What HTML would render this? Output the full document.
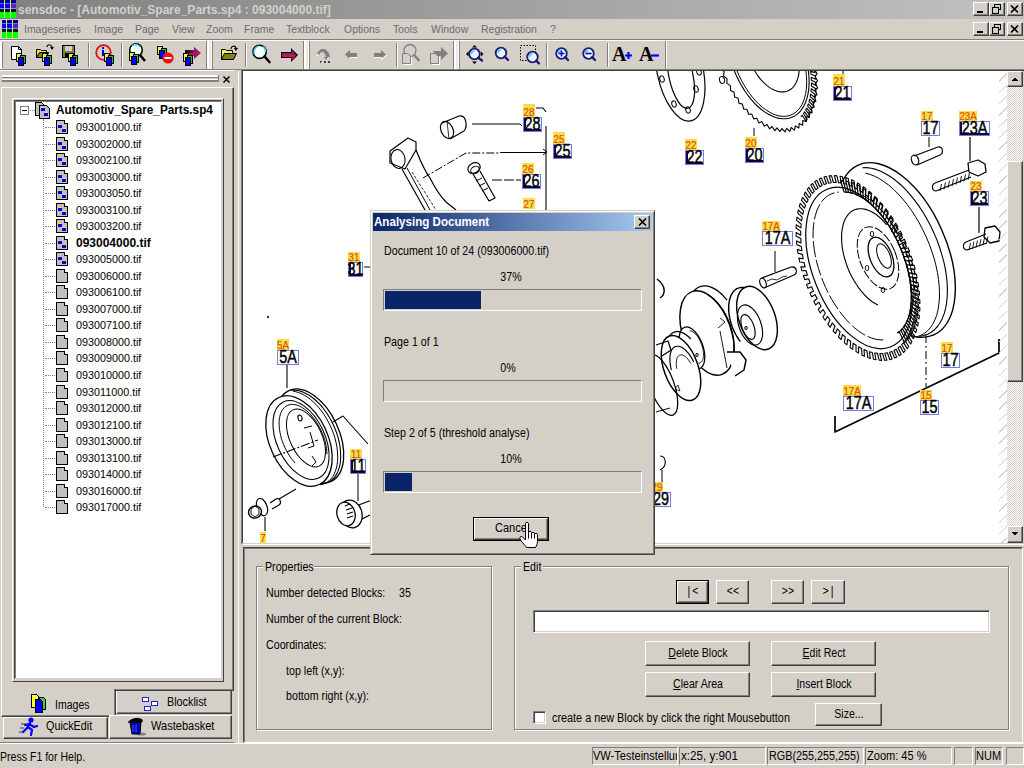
<!DOCTYPE html>
<html><head><meta charset="utf-8">
<style>
*{box-sizing:border-box}
html,body{margin:0;padding:0}
body{width:1024px;height:768px;position:relative;overflow:hidden;background:#d4d0c8;font-family:"Liberation Sans",sans-serif;font-size:11px;color:#000}
.a{position:absolute}
.t{position:absolute;white-space:nowrap;line-height:13px}
.btn{position:absolute;background:#d4d0c8;border-top:1px solid #fff;border-left:1px solid #fff;border-right:1px solid #404040;border-bottom:1px solid #404040;box-shadow:inset -1px -1px 0 #808080}
.sunk{position:absolute;border-top:1px solid #808080;border-left:1px solid #808080;border-right:1px solid #fff;border-bottom:1px solid #fff}
.etch{position:absolute;border-top:1px solid #808080;border-left:1px solid #808080;border-right:1px solid #fff;border-bottom:1px solid #fff;box-shadow:inset 1px 1px 0 #fff, -1px -1px 0 0 transparent}
.sb{position:absolute;border-top:1px solid #808080;border-left:1px solid #808080;border-right:1px solid #fff;border-bottom:1px solid #fff;height:17px;top:747px}
.lbl{position:absolute;white-space:nowrap;font-size:11px;line-height:13px}
</style></head>
<body>
<!-- TITLE BAR -->
<div class="a" style="left:0;top:0;width:1024px;height:19px;background:linear-gradient(to right,#808080 0,#c0c0c0 1000px)"></div>
<div class="t" style="left:18px;top:3px;font-weight:bold;font-size:12px;color:#d4d0c8;line-height:14px">sensdoc - [Automotiv_Spare_Parts.sp4 : 093004000.tif]</div>
<!-- title buttons -->
<div class="btn" style="left:973px;top:2px;width:16px;height:14px"></div>
<div class="btn" style="left:989px;top:2px;width:16px;height:14px"></div>
<div class="btn" style="left:1007px;top:2px;width:16px;height:14px"></div>

<!-- MENU BAR -->
<div class="a" style="left:0;top:39px;width:1024px;height:1px;background:#808080"></div>
<div class="a" style="left:0;top:40px;width:1024px;height:1px;background:#fff"></div>
<div class="t" style="left:24px;top:22.5px;color:#6c6c6c;font-size:11.5px;transform:scaleX(0.91);transform-origin:0 0">Imageseries</div>
<div class="t" style="left:94px;top:22.5px;color:#6c6c6c;font-size:11.5px;transform:scaleX(0.91);transform-origin:0 0">Image</div>
<div class="t" style="left:135px;top:22.5px;color:#6c6c6c;font-size:11.5px;transform:scaleX(0.91);transform-origin:0 0">Page</div>
<div class="t" style="left:172px;top:22.5px;color:#6c6c6c;font-size:11.5px;transform:scaleX(0.91);transform-origin:0 0">View</div>
<div class="t" style="left:206px;top:22.5px;color:#6c6c6c;font-size:11.5px;transform:scaleX(0.91);transform-origin:0 0">Zoom</div>
<div class="t" style="left:244px;top:22.5px;color:#6c6c6c;font-size:11.5px;transform:scaleX(0.91);transform-origin:0 0">Frame</div>
<div class="t" style="left:286px;top:22.5px;color:#6c6c6c;font-size:11.5px;transform:scaleX(0.91);transform-origin:0 0">Textblock</div>
<div class="t" style="left:344px;top:22.5px;color:#6c6c6c;font-size:11.5px;transform:scaleX(0.91);transform-origin:0 0">Options</div>
<div class="t" style="left:393px;top:22.5px;color:#6c6c6c;font-size:11.5px;transform:scaleX(0.91);transform-origin:0 0">Tools</div>
<div class="t" style="left:431px;top:22.5px;color:#6c6c6c;font-size:11.5px;transform:scaleX(0.91);transform-origin:0 0">Window</div>
<div class="t" style="left:481px;top:22.5px;color:#6c6c6c;font-size:11.5px;transform:scaleX(0.91);transform-origin:0 0">Registration</div>
<div class="t" style="left:550px;top:22.5px;color:#6c6c6c;font-size:11.5px;transform:scaleX(0.91);transform-origin:0 0">?</div>
<div class="btn" style="left:973px;top:22px;width:16px;height:14px"></div>
<div class="btn" style="left:989px;top:22px;width:16px;height:14px"></div>
<div class="btn" style="left:1007px;top:22px;width:16px;height:14px"></div>

<!-- TOOLBAR -->
<div class="a" style="left:0px;top:41px;width:1px;height:28px;background:#fff"></div>
<div class="a" style="left:1px;top:41px;width:1px;height:28px;background:#fff"></div>
<div class="a" style="left:2px;top:42px;width:1px;height:26px;background:#808080"></div>
<div class="a" style="left:206px;top:41px;width:1px;height:28px;background:#808080"></div>
<div class="a" style="left:207px;top:41px;width:1px;height:28px;background:#fff"></div>
<div class="a" style="left:208px;top:41px;width:1px;height:28px;background:#fff"></div>
<div class="a" style="left:209px;top:41px;width:1px;height:28px;background:#ece9e4"></div>
<div class="a" style="left:210px;top:41px;width:1px;height:28px;background:#ece9e4"></div>
<div class="a" style="left:211px;top:41px;width:1px;height:28px;background:#fff"></div>
<div class="a" style="left:212px;top:41px;width:1px;height:28px;background:#808080"></div>
<div class="a" style="left:303px;top:41px;width:1px;height:28px;background:#808080"></div>
<div class="a" style="left:304px;top:41px;width:1px;height:28px;background:#fff"></div>
<div class="a" style="left:305px;top:41px;width:1px;height:28px;background:#fff"></div>
<div class="a" style="left:306px;top:41px;width:1px;height:28px;background:#ece9e4"></div>
<div class="a" style="left:307px;top:41px;width:1px;height:28px;background:#ece9e4"></div>
<div class="a" style="left:308px;top:41px;width:1px;height:28px;background:#fff"></div>
<div class="a" style="left:309px;top:41px;width:1px;height:28px;background:#808080"></div>
<div class="a" style="left:453px;top:41px;width:1px;height:28px;background:#808080"></div>
<div class="a" style="left:454px;top:41px;width:1px;height:28px;background:#fff"></div>
<div class="a" style="left:455px;top:41px;width:1px;height:28px;background:#fff"></div>
<div class="a" style="left:456px;top:41px;width:1px;height:28px;background:#ece9e4"></div>
<div class="a" style="left:457px;top:41px;width:1px;height:28px;background:#ece9e4"></div>
<div class="a" style="left:458px;top:41px;width:1px;height:28px;background:#fff"></div>
<div class="a" style="left:459px;top:41px;width:1px;height:28px;background:#808080"></div>
<div class="a" style="left:665px;top:41px;width:1px;height:28px;background:#808080"></div>
<div class="a" style="left:666px;top:41px;width:1px;height:28px;background:#fff"></div>
<div class="a" style="left:88px;top:43px;width:1px;height:24px;background:#808080"></div>
<div class="a" style="left:89px;top:43px;width:1px;height:24px;background:#fff"></div>
<div class="a" style="left:121px;top:43px;width:1px;height:24px;background:#808080"></div>
<div class="a" style="left:122px;top:43px;width:1px;height:24px;background:#fff"></div>
<div class="a" style="left:245px;top:43px;width:1px;height:24px;background:#808080"></div>
<div class="a" style="left:246px;top:43px;width:1px;height:24px;background:#fff"></div>
<div class="a" style="left:396px;top:43px;width:1px;height:24px;background:#808080"></div>
<div class="a" style="left:397px;top:43px;width:1px;height:24px;background:#fff"></div>
<div class="a" style="left:546px;top:43px;width:1px;height:24px;background:#808080"></div>
<div class="a" style="left:547px;top:43px;width:1px;height:24px;background:#fff"></div>
<div class="a" style="left:607px;top:43px;width:1px;height:24px;background:#808080"></div>
<div class="a" style="left:608px;top:43px;width:1px;height:24px;background:#fff"></div>
<svg class="a" style="left:11px;top:45px" width="16" height="21" viewBox="0 0 16 21"><path d="M0.5 1.5H7.5L10.5 4.5V14.5H0.5Z" fill="#fff" stroke="#000"/><path d="M7.5 1.5V4.5H10.5" fill="none" stroke="#000"/><g transform="translate(5 8)" shape-rendering="crispEdges">
<path d="M0 0H5L6 1V9H0Z" fill="#000"/><path d="M1 1H4L5 2V8H1Z" fill="#f0f040"/>
<path d="M4 2H9L10 3V11H4Z" fill="#000"/><path d="M5 3H8L9 4V10H5Z" fill="#30c030"/>
<path d="M2 4H7L8 5V13H2Z" fill="#000"/><path d="M3 5H6L7 6V12H3Z" fill="#0000ff"/>
</g></svg>
<svg class="a" style="left:36px;top:44px" width="18" height="22" viewBox="0 0 18 22"><path d="M11 3C11 0 15 0 16 3" fill="none" stroke="#000" stroke-width="1.2"/><path d="M14 3H18L16 6Z" fill="#000"/><path d="M0.5 5.5H4.5L5.5 6.5H10.5V13.5H0.5Z" fill="#e8e050" stroke="#000"/><path d="M0.5 13.5L3.5 8.5H12.5L10.5 13.5Z" fill="#808020" stroke="#000"/><g transform="translate(6 9)" shape-rendering="crispEdges">
<path d="M0 0H5L6 1V9H0Z" fill="#000"/><path d="M1 1H4L5 2V8H1Z" fill="#f0f040"/>
<path d="M4 2H9L10 3V11H4Z" fill="#000"/><path d="M5 3H8L9 4V10H5Z" fill="#30c030"/>
<path d="M2 4H7L8 5V13H2Z" fill="#000"/><path d="M3 5H6L7 6V12H3Z" fill="#0000ff"/>
</g></svg>
<svg class="a" style="left:62px;top:44px" width="18" height="22" viewBox="0 0 18 22"><rect x="0.5" y="1.5" width="12" height="12" fill="#808040" stroke="#000"/><rect x="3" y="2" width="7" height="5" fill="#d4d0c8"/><rect x="3" y="9" width="6" height="4" fill="#000"/><g transform="translate(6 9)" shape-rendering="crispEdges">
<path d="M0 0H5L6 1V9H0Z" fill="#000"/><path d="M1 1H4L5 2V8H1Z" fill="#f0f040"/>
<path d="M4 2H9L10 3V11H4Z" fill="#000"/><path d="M5 3H8L9 4V10H5Z" fill="#30c030"/>
<path d="M2 4H7L8 5V13H2Z" fill="#000"/><path d="M3 5H6L7 6V12H3Z" fill="#0000ff"/>
</g></svg>
<svg class="a" style="left:94px;top:43px" width="22" height="23" viewBox="0 0 22 23"><circle cx="9.5" cy="9.5" r="7.3" fill="none" stroke="#e01010" stroke-width="1.8"/><rect x="8" y="4" width="2" height="2" fill="#0000d0"/><rect x="8" y="7" width="2" height="6" fill="#0000d0"/><g transform="translate(10 10)" shape-rendering="crispEdges">
<path d="M0 0H5L6 1V9H0Z" fill="#000"/><path d="M1 1H4L5 2V8H1Z" fill="#f0f040"/>
<path d="M4 2H9L10 3V11H4Z" fill="#000"/><path d="M5 3H8L9 4V10H5Z" fill="#30c030"/>
<path d="M2 4H7L8 5V13H2Z" fill="#000"/><path d="M3 5H6L7 6V12H3Z" fill="#0000ff"/>
</g></svg>
<svg class="a" style="left:126px;top:42px" width="22" height="24" viewBox="0 0 22 24"><circle cx="10" cy="8" r="6.3" fill="#f0ffff" stroke="#000" stroke-width="1.5"/><path d="M6 4A5 5 0 0 1 14 5" stroke="#40d0e0" stroke-width="1.5" fill="none"/><path d="M14 13L19 19" stroke="#000" stroke-width="2.6"/><g transform="translate(3 10)" shape-rendering="crispEdges">
<path d="M0 0H5L6 1V9H0Z" fill="#000"/><path d="M1 1H4L5 2V8H1Z" fill="#f0f040"/>
<path d="M4 2H9L10 3V11H4Z" fill="#000"/><path d="M5 3H8L9 4V10H5Z" fill="#30c030"/>
<path d="M2 4H7L8 5V13H2Z" fill="#000"/><path d="M3 5H6L7 6V12H3Z" fill="#0000ff"/>
</g></svg>
<svg class="a" style="left:156px;top:45px" width="20" height="20" viewBox="0 0 20 20"><g transform="translate(1 1)" shape-rendering="crispEdges">
<path d="M0 0H5L6 1V9H0Z" fill="#000"/><path d="M1 1H4L5 2V8H1Z" fill="#f0f040"/>
<path d="M4 2H9L10 3V11H4Z" fill="#000"/><path d="M5 3H8L9 4V10H5Z" fill="#30c030"/>
<path d="M2 4H7L8 5V13H2Z" fill="#000"/><path d="M3 5H6L7 6V12H3Z" fill="#0000ff"/>
</g><circle cx="12" cy="13" r="5.6" fill="#ee1010"/><rect x="8.5" y="12" width="7" height="2" fill="#fff"/></svg>
<svg class="a" style="left:182px;top:46px" width="21" height="20" viewBox="0 0 21 20"><defs><linearGradient id="ag" x1="0" x2="1"><stop offset="0" stop-color="#000"/><stop offset="0.6" stop-color="#802080"/><stop offset="1" stop-color="#e01030"/></linearGradient></defs><path d="M3 4H12V1L19 7L12 13V10H3Z" fill="url(#ag)"/><path d="M5 7H12V10H5Z" fill="#d01020"/><g transform="translate(1 7)" shape-rendering="crispEdges">
<path d="M0 0H5L6 1V9H0Z" fill="#000"/><path d="M1 1H4L5 2V8H1Z" fill="#f0f040"/>
<path d="M4 2H9L10 3V11H4Z" fill="#000"/><path d="M5 3H8L9 4V10H5Z" fill="#30c030"/>
<path d="M2 4H7L8 5V13H2Z" fill="#000"/><path d="M3 5H6L7 6V12H3Z" fill="#0000ff"/>
</g></svg>
<svg class="a" style="left:221px;top:45px" width="18" height="18" viewBox="0 0 18 18"><path d="M10 4C10 1 14 0 15 3" fill="none" stroke="#000" stroke-width="1.2"/><path d="M13 3H17L15 6Z" fill="#000"/><path d="M0.5 4.5H4.5L5.5 5.5H11.5V14.5H0.5Z" fill="#f0f060" stroke="#000"/><path d="M0.5 14.5L3.5 8.5H15.5L12.5 14.5Z" fill="#808020" stroke="#000"/></svg>
<svg class="a" style="left:251px;top:43px" width="21" height="22" viewBox="0 0 21 22"><circle cx="8.6" cy="8.8" r="6.6" fill="#f4ffff" stroke="#000" stroke-width="1.6"/><path d="M3.5 11A6 6 0 0 1 8 3" stroke="#50d8e8" stroke-width="1.6" fill="none"/><path d="M12 3.5A6 6 0 0 1 14.5 9" stroke="#50d8e8" stroke-width="1.4" fill="none"/><path d="M13.5 13.5L18.5 19" stroke="#000" stroke-width="2.6" stroke-linecap="round"/></svg>
<svg class="a" style="left:281px;top:48px" width="18" height="15" viewBox="0 0 18 15"><path d="M0 4H10V0L17 7L10 14V10H0Z" fill="#000"/><path d="M1 5H11V2L15 7L11 12V9H1Z" fill="#802080"/><path d="M1 7H15L11 12V9H1Z" fill="#e01030"/></svg>
<svg class="a" style="left:316px;top:47px" width="18" height="17" viewBox="0 0 18 17"><path d="M1 6L5 2H9L13 6L14 10H12L10 13L8 10H10L9 7L7 5H5L3 8Z" fill="#808080"/><path d="M2 7L1 9" stroke="#fff"/><rect x="4" y="14" width="2" height="2" fill="#404040"/><rect x="8" y="14" width="2" height="2" fill="#404040"/><rect x="12" y="14" width="2" height="2" fill="#404040"/><rect x="5" y="15" width="1" height="1" fill="#fff"/></svg>
<svg class="a" style="left:345px;top:50px" width="14" height="10" viewBox="0 0 14 10"><path d="M0 4.5L5 0V3H12V7H5V9Z" fill="#808080"/><path d="M5 9.5V7.5H12.5" stroke="#fff" fill="none"/></svg>
<svg class="a" style="left:373px;top:50px" width="14" height="10" viewBox="0 0 14 10"><path d="M13 4.5L8 0V3H1V7H8V9Z" fill="#808080"/><path d="M1 7.5H8.5V9.5L13.5 5" stroke="#fff" fill="none"/></svg>
<svg class="a" style="left:401px;top:43px" width="21" height="22" viewBox="0 0 21 22"><circle cx="9" cy="7.5" r="6" fill="none" stroke="#808080" stroke-width="1.3"/><path d="M13 12L18.5 18" stroke="#808080" stroke-width="2.5"/><path d="M1.5 10.5H6.5L9.5 13.5V20.5H1.5Z" fill="#d4d0c8" stroke="#808080"/><path d="M2.5 21.5H10.5V14" stroke="#fff" fill="none"/></svg>
<svg class="a" style="left:429px;top:46px" width="20" height="19" viewBox="0 0 20 19"><path d="M4 5H12V1L19 7.5L12 14V10H7" fill="#808080"/><path d="M1.5 7.5H6.5L9.5 10.5V17.5H1.5Z" fill="#d4d0c8" stroke="#808080"/><path d="M2.5 18.5H10.5V11" stroke="#fff" fill="none"/></svg>
<svg class="a" style="left:464px;top:45px" width="21" height="20" viewBox="0 0 21 20"><defs></defs><circle cx="10.5" cy="9" r="5.3" fill="#e8f8ff" stroke="#1c1c70" stroke-width="1.8"/><path d="M7.5 9A3 3 0 0 1 10.5 6" stroke="#50c8f0" stroke-width="1.4" fill="none"/><path d="M14.209999999999999 12.709999999999999L18 15.5" stroke="#1c1c70" stroke-width="2.4" stroke-linecap="round"/><path d="M10.5 0L13 2.5H8Z M10.5 19L13 16.5H8Z M2 9L4.5 6.5V11.5Z M19.5 9L17 6.5V11.5Z" fill="#000"/></svg>
<svg class="a" style="left:493px;top:45px" width="18" height="18" viewBox="0 0 18 18"><defs></defs><circle cx="8" cy="8" r="5.3" fill="#e8f8ff" stroke="#1c1c70" stroke-width="1.8"/><path d="M5 8A3 3 0 0 1 8 5" stroke="#50c8f0" stroke-width="1.4" fill="none"/><path d="M11.709999999999999 11.709999999999999L15 15" stroke="#1c1c70" stroke-width="2.4" stroke-linecap="round"/></svg>
<svg class="a" style="left:518px;top:43px" width="24" height="23" viewBox="0 0 24 23"><rect x="2.5" y="2.5" width="15" height="15" fill="none" stroke="#000" stroke-dasharray="1.5 1.5"/><defs></defs><circle cx="14.5" cy="14" r="5.3" fill="#e8f8ff" stroke="#1c1c70" stroke-width="1.8"/><path d="M11.5 14A3 3 0 0 1 14.5 11" stroke="#50c8f0" stroke-width="1.4" fill="none"/><path d="M18.21 17.71L21 20.5" stroke="#1c1c70" stroke-width="2.4" stroke-linecap="round"/></svg>
<svg class="a" style="left:553px;top:45px" width="18" height="18" viewBox="0 0 18 18"><defs></defs><circle cx="8.5" cy="8.5" r="5.3" fill="#e8f8ff" stroke="#1c1c70" stroke-width="1.8"/><path d="M5.5 8.5A3 3 0 0 1 8.5 5.5" stroke="#50c8f0" stroke-width="1.4" fill="none"/><path d="M12.209999999999999 12.209999999999999L15 15" stroke="#1c1c70" stroke-width="2.4" stroke-linecap="round"/><path d="M8.5 5.5V11.5M5.5 8.5H11.5" stroke="#0000e0" stroke-width="1.6"/></svg>
<svg class="a" style="left:580px;top:45px" width="18" height="18" viewBox="0 0 18 18"><defs></defs><circle cx="8.5" cy="8.5" r="5.3" fill="#e8f8ff" stroke="#1c1c70" stroke-width="1.8"/><path d="M5.5 8.5A3 3 0 0 1 8.5 5.5" stroke="#50c8f0" stroke-width="1.4" fill="none"/><path d="M12.209999999999999 12.209999999999999L15 15" stroke="#1c1c70" stroke-width="2.4" stroke-linecap="round"/><path d="M5.5 8.5H11.5" stroke="#0000e0" stroke-width="1.6"/></svg>
<div class="t" style="left:612px;top:44px;font-family:'Liberation Serif',serif;font-weight:bold;font-size:20px;line-height:20px">A</div>
<svg class="a" style="left:624px;top:51px" width="9" height="9" viewBox="0 0 9 9"><path d="M4.5 1V8M1 4.5H8" stroke="#0000ff" stroke-width="2.2"/></svg>
<div class="t" style="left:639px;top:44px;font-family:'Liberation Serif',serif;font-weight:bold;font-size:20px;line-height:20px">A</div>
<svg class="a" style="left:650px;top:51px" width="10" height="9" viewBox="0 0 10 9"><path d="M1 4.5H9" stroke="#0000ff" stroke-width="2.2"/></svg>
<div class="a" style="left:0;top:69px;width:1024px;height:1px;background:#808080"></div>

<!-- LEFT PANEL -->
<div class="a" style="left:0;top:70px;width:234px;height:1px;background:#fff"></div>
<div class="a" style="left:2px;top:75px;width:217px;height:1px;background:#fff"></div>
<div class="a" style="left:2px;top:76px;width:217px;height:1px;background:#fff"></div>
<div class="a" style="left:2px;top:77px;width:217px;height:1px;background:#808080"></div>
<div class="a" style="left:2px;top:79px;width:217px;height:1px;background:#fff"></div>
<div class="a" style="left:2px;top:80px;width:217px;height:1px;background:#808080"></div>
<div class="a" style="left:2px;top:81px;width:217px;height:1px;background:#808080"></div>
<div class="a" style="left:218px;top:75px;width:1px;height:7px;background:#808080"></div>
<svg class="a" style="left:222px;top:75px" width="9" height="8"><path d="M1.5 1.5L7.5 7.5M7.5 1.5L1.5 7.5" stroke="#000" stroke-width="1.5"/></svg>
<div class="a" style="left:1px;top:87px;width:233px;height:604px;border-top:1px solid #fff;border-left:1px solid #fff;border-right:1px solid #404040;border-bottom:1px solid #404040;box-shadow:inset -1px -1px 0 #808080"></div>
<div class="a" style="left:12px;top:98px;width:212px;height:584px;border-top:1px solid #fff;border-left:1px solid #fff;border-right:1px solid #404040;border-bottom:1px solid #404040"></div>
<div class="a" style="left:14px;top:100px;width:208px;height:579px;background:#fff;border-top:1px solid #404040;border-left:1px solid #404040;border-right:1px solid #d4d0c8;border-bottom:1px solid #d4d0c8;box-shadow:inset 1px 1px 0 #808080"></div>
<div class="a" style="left:1px;top:689px;width:115px;height:28px;background:#d4d0c8;border-left:1px solid #fff;border-right:1px solid #404040;border-bottom:1px solid #404040;box-shadow:inset -1px -1px 0 #808080"></div>
<div class="a" style="left:116px;top:691px;width:116px;height:23px;background:#d4d0c8;border-left:1px solid #fff;border-right:1px solid #404040;border-bottom:1px solid #404040;box-shadow:inset -1px -1px 0 #808080"></div>
<div class="a" style="left:3px;top:717px;width:105px;height:22px;background:#d4d0c8;border-left:1px solid #fff;border-top:1px solid #fff;border-right:1px solid #404040;border-bottom:1px solid #404040;box-shadow:inset -1px -1px 0 #808080"></div>
<div class="a" style="left:109px;top:715px;width:123px;height:24px;background:#d4d0c8;border-left:1px solid #fff;border-top:1px solid #fff;border-right:1px solid #404040;border-bottom:1px solid #404040;box-shadow:inset -1px -1px 0 #808080"></div>
<div class="t" style="left:55px;top:699px;font-size:12px;transform:scaleX(0.88);transform-origin:0 0">Images</div>
<div class="t" style="left:167px;top:696px;font-size:12px;transform:scaleX(0.9);transform-origin:0 0">Blocklist</div>
<div class="t" style="left:46px;top:720px;font-size:12px;transform:scaleX(0.9);transform-origin:0 0">QuickEdit</div>
<div class="t" style="left:151px;top:720px;font-size:12px;transform:scaleX(0.92);transform-origin:0 0">Wastebasket</div>
<svg class="a" style="left:31px;top:694px" width="18" height="20" shape-rendering="crispEdges">
<path d="M0.5 0.5H5.5L7.5 2.5V13.5H0.5Z" fill="#ffff40" stroke="#000"/>
<path d="M8.5 3.5H12.5L14.5 5.5V15.5H8.5Z" fill="#40d040" stroke="#000"/>
<path d="M4.5 5.5H9.5L11.5 7.5V18.5H4.5Z" fill="#0000ff" stroke="#000"/>
</svg>
<svg class="a" style="left:141px;top:693px" width="20" height="18" shape-rendering="crispEdges">
<rect x="1.5" y="4.5" width="6" height="4" fill="#fff" stroke="#2020e0"/>
<rect x="10.5" y="8.5" width="6" height="4" fill="#fff" stroke="#2020e0"/>
<rect x="3.5" y="13.5" width="6" height="4" fill="#fff" stroke="#2020e0"/>
<rect x="2" y="3" width="3" height="1" fill="#e0d040"/><rect x="11" y="7" width="3" height="1" fill="#e0d040"/>
</svg>
<svg class="a" style="left:19px;top:717px" width="20" height="19">
<circle cx="12" cy="3" r="2.6" fill="#0000ff"/>
<path d="M11 6L8 11L4 15M9 10L13 13L12 18M10 7L15 10L18 9M10 7L6 8" stroke="#0000ff" stroke-width="2.2" fill="none" stroke-linecap="round"/>
<path d="M2 7H7M1 11H5M0 15H3" stroke="#404040" stroke-width="1"/>
</svg>
<svg class="a" style="left:127px;top:716px" width="19" height="20">
<ellipse cx="14" cy="18" rx="5" ry="1.5" fill="#808080"/>
<path d="M3 6L5 18H13L14 6Z" fill="#0000c0" stroke="#000" stroke-width="1"/>
<path d="M1 7C2 2 15 0 16 5L14 7Z" fill="#000"/>
<path d="M6 9V16M9 9V16" stroke="#4060ff" stroke-width="1"/>
</svg>
<div class="a" style="left:0;top:742px;width:234px;height:1px;background:#808080"></div>
<div class="a" style="left:0;top:743px;width:1024px;height:1px;background:#fff"></div>
<div class="a" style="left:20px;top:106px;width:9px;height:9px;border:1px solid #808080;background:#fff"></div>
<div class="a" style="left:22px;top:110px;width:5px;height:1px;background:#000"></div>
<div class="a" style="left:30px;top:110px;width:5px;height:1px;border-top:1px dotted #808080"></div>
<div class="a" style="left:43px;top:119px;width:1px;height:388.2px;border-left:1px dotted #808080"></div>
<svg class="a" style="left:35px;top:102px" width="16" height="17" shape-rendering="crispEdges">
<path d="M0.5 0.5H6.5L8.5 2.5V13.5H0.5Z" fill="#c0c0c0" stroke="#000"/>
<path d="M4.5 3.5H11.5L14.5 6.5V16.5H4.5Z" fill="#c0c0c0" stroke="#000"/>
<rect x="6" y="6" width="4" height="3" fill="#0000e0"/><rect x="9" y="11" width="4" height="3" fill="#0000e0"/>
<rect x="6" y="5" width="3" height="1" fill="#e8e060"/><rect x="10" y="10" width="3" height="1" fill="#e8e060"/>
</svg>
<div class="t" style="left:56px;top:103px;font-weight:bold;font-size:12px;line-height:14px;transform:scaleX(0.98);transform-origin:0 0">Automotiv_Spare_Parts.sp4</div>
<div class="a" style="left:45px;top:127.0px;width:10px;height:1px;border-top:1px dotted #808080"></div>
<svg class="a" style="left:56px;top:120.0px" width="13" height="15" shape-rendering="crispEdges"><path d="M0.5 0.5H8.5L11.5 3.5V13.5H0.5Z" fill="#c0c0c0" stroke="#000"/><path d="M8.5 0.5V3.5H11.5" fill="#fff" stroke="#000"/><rect x="2" y="5" width="4" height="3" fill="#0000e0"/><rect x="6" y="9" width="4" height="3" fill="#0000e0"/><rect x="2" y="4" width="3" height="1" fill="#e8e060"/><rect x="7" y="8" width="3" height="1" fill="#e8e060"/></svg>
<div class="t" style="left:76px;top:120.0px;font-size:11.6px;line-height:14px;transform:scaleX(0.93);transform-origin:0 0">093001000.tif</div>
<div class="a" style="left:45px;top:143.5px;width:10px;height:1px;border-top:1px dotted #808080"></div>
<svg class="a" style="left:56px;top:136.5px" width="13" height="15" shape-rendering="crispEdges"><path d="M0.5 0.5H8.5L11.5 3.5V13.5H0.5Z" fill="#c0c0c0" stroke="#000"/><path d="M8.5 0.5V3.5H11.5" fill="#fff" stroke="#000"/><rect x="2" y="5" width="4" height="3" fill="#0000e0"/><rect x="6" y="9" width="4" height="3" fill="#0000e0"/><rect x="2" y="4" width="3" height="1" fill="#e8e060"/><rect x="7" y="8" width="3" height="1" fill="#e8e060"/></svg>
<div class="t" style="left:76px;top:136.5px;font-size:11.6px;line-height:14px;transform:scaleX(0.93);transform-origin:0 0">093002000.tif</div>
<div class="a" style="left:45px;top:160.1px;width:10px;height:1px;border-top:1px dotted #808080"></div>
<svg class="a" style="left:56px;top:153.1px" width="13" height="15" shape-rendering="crispEdges"><path d="M0.5 0.5H8.5L11.5 3.5V13.5H0.5Z" fill="#c0c0c0" stroke="#000"/><path d="M8.5 0.5V3.5H11.5" fill="#fff" stroke="#000"/><rect x="2" y="5" width="4" height="3" fill="#0000e0"/><rect x="6" y="9" width="4" height="3" fill="#0000e0"/><rect x="2" y="4" width="3" height="1" fill="#e8e060"/><rect x="7" y="8" width="3" height="1" fill="#e8e060"/></svg>
<div class="t" style="left:76px;top:153.1px;font-size:11.6px;line-height:14px;transform:scaleX(0.93);transform-origin:0 0">093002100.tif</div>
<div class="a" style="left:45px;top:176.6px;width:10px;height:1px;border-top:1px dotted #808080"></div>
<svg class="a" style="left:56px;top:169.6px" width="13" height="15" shape-rendering="crispEdges"><path d="M0.5 0.5H8.5L11.5 3.5V13.5H0.5Z" fill="#c0c0c0" stroke="#000"/><path d="M8.5 0.5V3.5H11.5" fill="#fff" stroke="#000"/><rect x="2" y="5" width="4" height="3" fill="#0000e0"/><rect x="6" y="9" width="4" height="3" fill="#0000e0"/><rect x="2" y="4" width="3" height="1" fill="#e8e060"/><rect x="7" y="8" width="3" height="1" fill="#e8e060"/></svg>
<div class="t" style="left:76px;top:169.6px;font-size:11.6px;line-height:14px;transform:scaleX(0.93);transform-origin:0 0">093003000.tif</div>
<div class="a" style="left:45px;top:193.1px;width:10px;height:1px;border-top:1px dotted #808080"></div>
<svg class="a" style="left:56px;top:186.1px" width="13" height="15" shape-rendering="crispEdges"><path d="M0.5 0.5H8.5L11.5 3.5V13.5H0.5Z" fill="#c0c0c0" stroke="#000"/><path d="M8.5 0.5V3.5H11.5" fill="#fff" stroke="#000"/><rect x="2" y="5" width="4" height="3" fill="#0000e0"/><rect x="6" y="9" width="4" height="3" fill="#0000e0"/><rect x="2" y="4" width="3" height="1" fill="#e8e060"/><rect x="7" y="8" width="3" height="1" fill="#e8e060"/></svg>
<div class="t" style="left:76px;top:186.1px;font-size:11.6px;line-height:14px;transform:scaleX(0.93);transform-origin:0 0">093003050.tif</div>
<div class="a" style="left:45px;top:209.7px;width:10px;height:1px;border-top:1px dotted #808080"></div>
<svg class="a" style="left:56px;top:202.7px" width="13" height="15" shape-rendering="crispEdges"><path d="M0.5 0.5H8.5L11.5 3.5V13.5H0.5Z" fill="#c0c0c0" stroke="#000"/><path d="M8.5 0.5V3.5H11.5" fill="#fff" stroke="#000"/><rect x="2" y="5" width="4" height="3" fill="#0000e0"/><rect x="6" y="9" width="4" height="3" fill="#0000e0"/><rect x="2" y="4" width="3" height="1" fill="#e8e060"/><rect x="7" y="8" width="3" height="1" fill="#e8e060"/></svg>
<div class="t" style="left:76px;top:202.7px;font-size:11.6px;line-height:14px;transform:scaleX(0.93);transform-origin:0 0">093003100.tif</div>
<div class="a" style="left:45px;top:226.2px;width:10px;height:1px;border-top:1px dotted #808080"></div>
<svg class="a" style="left:56px;top:219.2px" width="13" height="15" shape-rendering="crispEdges"><path d="M0.5 0.5H8.5L11.5 3.5V13.5H0.5Z" fill="#c0c0c0" stroke="#000"/><path d="M8.5 0.5V3.5H11.5" fill="#fff" stroke="#000"/><rect x="2" y="5" width="4" height="3" fill="#0000e0"/><rect x="6" y="9" width="4" height="3" fill="#0000e0"/><rect x="2" y="4" width="3" height="1" fill="#e8e060"/><rect x="7" y="8" width="3" height="1" fill="#e8e060"/></svg>
<div class="t" style="left:76px;top:219.2px;font-size:11.6px;line-height:14px;transform:scaleX(0.93);transform-origin:0 0">093003200.tif</div>
<div class="a" style="left:45px;top:242.7px;width:10px;height:1px;border-top:1px dotted #808080"></div>
<svg class="a" style="left:56px;top:235.7px" width="13" height="15" shape-rendering="crispEdges"><path d="M0.5 0.5H8.5L11.5 3.5V13.5H0.5Z" fill="#c0c0c0" stroke="#000"/><path d="M8.5 0.5V3.5H11.5" fill="#fff" stroke="#000"/><rect x="2" y="5" width="4" height="3" fill="#0000e0"/><rect x="6" y="9" width="4" height="3" fill="#0000e0"/><rect x="2" y="4" width="3" height="1" fill="#e8e060"/><rect x="7" y="8" width="3" height="1" fill="#e8e060"/></svg>
<div class="t" style="left:76px;top:235.7px;font-weight:bold;font-size:12px;line-height:14px">093004000.tif</div>
<div class="a" style="left:45px;top:259.2px;width:10px;height:1px;border-top:1px dotted #808080"></div>
<svg class="a" style="left:56px;top:252.2px" width="13" height="15" shape-rendering="crispEdges"><path d="M0.5 0.5H8.5L11.5 3.5V13.5H0.5Z" fill="#c0c0c0" stroke="#000"/><path d="M8.5 0.5V3.5H11.5" fill="#fff" stroke="#000"/><rect x="2" y="5" width="4" height="3" fill="#0000e0"/><rect x="6" y="9" width="4" height="3" fill="#0000e0"/><rect x="2" y="4" width="3" height="1" fill="#e8e060"/><rect x="7" y="8" width="3" height="1" fill="#e8e060"/></svg>
<div class="t" style="left:76px;top:252.2px;font-size:11.6px;line-height:14px;transform:scaleX(0.93);transform-origin:0 0">093005000.tif</div>
<div class="a" style="left:45px;top:275.8px;width:10px;height:1px;border-top:1px dotted #808080"></div>
<svg class="a" style="left:56px;top:268.8px" width="13" height="15" shape-rendering="crispEdges"><path d="M0.5 0.5H8.5L11.5 3.5V13.5H0.5Z" fill="#c0c0c0" stroke="#000"/><path d="M8.5 0.5V3.5H11.5" fill="#fff" stroke="#000"/></svg>
<div class="t" style="left:76px;top:268.8px;font-size:11.6px;line-height:14px;transform:scaleX(0.93);transform-origin:0 0">093006000.tif</div>
<div class="a" style="left:45px;top:292.3px;width:10px;height:1px;border-top:1px dotted #808080"></div>
<svg class="a" style="left:56px;top:285.3px" width="13" height="15" shape-rendering="crispEdges"><path d="M0.5 0.5H8.5L11.5 3.5V13.5H0.5Z" fill="#c0c0c0" stroke="#000"/><path d="M8.5 0.5V3.5H11.5" fill="#fff" stroke="#000"/></svg>
<div class="t" style="left:76px;top:285.3px;font-size:11.6px;line-height:14px;transform:scaleX(0.93);transform-origin:0 0">093006100.tif</div>
<div class="a" style="left:45px;top:308.8px;width:10px;height:1px;border-top:1px dotted #808080"></div>
<svg class="a" style="left:56px;top:301.8px" width="13" height="15" shape-rendering="crispEdges"><path d="M0.5 0.5H8.5L11.5 3.5V13.5H0.5Z" fill="#c0c0c0" stroke="#000"/><path d="M8.5 0.5V3.5H11.5" fill="#fff" stroke="#000"/></svg>
<div class="t" style="left:76px;top:301.8px;font-size:11.6px;line-height:14px;transform:scaleX(0.93);transform-origin:0 0">093007000.tif</div>
<div class="a" style="left:45px;top:325.4px;width:10px;height:1px;border-top:1px dotted #808080"></div>
<svg class="a" style="left:56px;top:318.4px" width="13" height="15" shape-rendering="crispEdges"><path d="M0.5 0.5H8.5L11.5 3.5V13.5H0.5Z" fill="#c0c0c0" stroke="#000"/><path d="M8.5 0.5V3.5H11.5" fill="#fff" stroke="#000"/></svg>
<div class="t" style="left:76px;top:318.4px;font-size:11.6px;line-height:14px;transform:scaleX(0.93);transform-origin:0 0">093007100.tif</div>
<div class="a" style="left:45px;top:341.9px;width:10px;height:1px;border-top:1px dotted #808080"></div>
<svg class="a" style="left:56px;top:334.9px" width="13" height="15" shape-rendering="crispEdges"><path d="M0.5 0.5H8.5L11.5 3.5V13.5H0.5Z" fill="#c0c0c0" stroke="#000"/><path d="M8.5 0.5V3.5H11.5" fill="#fff" stroke="#000"/></svg>
<div class="t" style="left:76px;top:334.9px;font-size:11.6px;line-height:14px;transform:scaleX(0.93);transform-origin:0 0">093008000.tif</div>
<div class="a" style="left:45px;top:358.4px;width:10px;height:1px;border-top:1px dotted #808080"></div>
<svg class="a" style="left:56px;top:351.4px" width="13" height="15" shape-rendering="crispEdges"><path d="M0.5 0.5H8.5L11.5 3.5V13.5H0.5Z" fill="#c0c0c0" stroke="#000"/><path d="M8.5 0.5V3.5H11.5" fill="#fff" stroke="#000"/></svg>
<div class="t" style="left:76px;top:351.4px;font-size:11.6px;line-height:14px;transform:scaleX(0.93);transform-origin:0 0">093009000.tif</div>
<div class="a" style="left:45px;top:375.0px;width:10px;height:1px;border-top:1px dotted #808080"></div>
<svg class="a" style="left:56px;top:368.0px" width="13" height="15" shape-rendering="crispEdges"><path d="M0.5 0.5H8.5L11.5 3.5V13.5H0.5Z" fill="#c0c0c0" stroke="#000"/><path d="M8.5 0.5V3.5H11.5" fill="#fff" stroke="#000"/></svg>
<div class="t" style="left:76px;top:368.0px;font-size:11.6px;line-height:14px;transform:scaleX(0.93);transform-origin:0 0">093010000.tif</div>
<div class="a" style="left:45px;top:391.5px;width:10px;height:1px;border-top:1px dotted #808080"></div>
<svg class="a" style="left:56px;top:384.5px" width="13" height="15" shape-rendering="crispEdges"><path d="M0.5 0.5H8.5L11.5 3.5V13.5H0.5Z" fill="#c0c0c0" stroke="#000"/><path d="M8.5 0.5V3.5H11.5" fill="#fff" stroke="#000"/></svg>
<div class="t" style="left:76px;top:384.5px;font-size:11.6px;line-height:14px;transform:scaleX(0.93);transform-origin:0 0">093011000.tif</div>
<div class="a" style="left:45px;top:408.0px;width:10px;height:1px;border-top:1px dotted #808080"></div>
<svg class="a" style="left:56px;top:401.0px" width="13" height="15" shape-rendering="crispEdges"><path d="M0.5 0.5H8.5L11.5 3.5V13.5H0.5Z" fill="#c0c0c0" stroke="#000"/><path d="M8.5 0.5V3.5H11.5" fill="#fff" stroke="#000"/></svg>
<div class="t" style="left:76px;top:401.0px;font-size:11.6px;line-height:14px;transform:scaleX(0.93);transform-origin:0 0">093012000.tif</div>
<div class="a" style="left:45px;top:424.5px;width:10px;height:1px;border-top:1px dotted #808080"></div>
<svg class="a" style="left:56px;top:417.5px" width="13" height="15" shape-rendering="crispEdges"><path d="M0.5 0.5H8.5L11.5 3.5V13.5H0.5Z" fill="#c0c0c0" stroke="#000"/><path d="M8.5 0.5V3.5H11.5" fill="#fff" stroke="#000"/></svg>
<div class="t" style="left:76px;top:417.5px;font-size:11.6px;line-height:14px;transform:scaleX(0.93);transform-origin:0 0">093012100.tif</div>
<div class="a" style="left:45px;top:441.1px;width:10px;height:1px;border-top:1px dotted #808080"></div>
<svg class="a" style="left:56px;top:434.1px" width="13" height="15" shape-rendering="crispEdges"><path d="M0.5 0.5H8.5L11.5 3.5V13.5H0.5Z" fill="#c0c0c0" stroke="#000"/><path d="M8.5 0.5V3.5H11.5" fill="#fff" stroke="#000"/></svg>
<div class="t" style="left:76px;top:434.1px;font-size:11.6px;line-height:14px;transform:scaleX(0.93);transform-origin:0 0">093013000.tif</div>
<div class="a" style="left:45px;top:457.6px;width:10px;height:1px;border-top:1px dotted #808080"></div>
<svg class="a" style="left:56px;top:450.6px" width="13" height="15" shape-rendering="crispEdges"><path d="M0.5 0.5H8.5L11.5 3.5V13.5H0.5Z" fill="#c0c0c0" stroke="#000"/><path d="M8.5 0.5V3.5H11.5" fill="#fff" stroke="#000"/></svg>
<div class="t" style="left:76px;top:450.6px;font-size:11.6px;line-height:14px;transform:scaleX(0.93);transform-origin:0 0">093013100.tif</div>
<div class="a" style="left:45px;top:474.1px;width:10px;height:1px;border-top:1px dotted #808080"></div>
<svg class="a" style="left:56px;top:467.1px" width="13" height="15" shape-rendering="crispEdges"><path d="M0.5 0.5H8.5L11.5 3.5V13.5H0.5Z" fill="#c0c0c0" stroke="#000"/><path d="M8.5 0.5V3.5H11.5" fill="#fff" stroke="#000"/></svg>
<div class="t" style="left:76px;top:467.1px;font-size:11.6px;line-height:14px;transform:scaleX(0.93);transform-origin:0 0">093014000.tif</div>
<div class="a" style="left:45px;top:490.7px;width:10px;height:1px;border-top:1px dotted #808080"></div>
<svg class="a" style="left:56px;top:483.7px" width="13" height="15" shape-rendering="crispEdges"><path d="M0.5 0.5H8.5L11.5 3.5V13.5H0.5Z" fill="#c0c0c0" stroke="#000"/><path d="M8.5 0.5V3.5H11.5" fill="#fff" stroke="#000"/></svg>
<div class="t" style="left:76px;top:483.7px;font-size:11.6px;line-height:14px;transform:scaleX(0.93);transform-origin:0 0">093016000.tif</div>
<div class="a" style="left:45px;top:507.2px;width:10px;height:1px;border-top:1px dotted #808080"></div>
<svg class="a" style="left:56px;top:500.2px" width="13" height="15" shape-rendering="crispEdges"><path d="M0.5 0.5H8.5L11.5 3.5V13.5H0.5Z" fill="#c0c0c0" stroke="#000"/><path d="M8.5 0.5V3.5H11.5" fill="#fff" stroke="#000"/></svg>
<div class="t" style="left:76px;top:500.2px;font-size:11.6px;line-height:14px;transform:scaleX(0.93);transform-origin:0 0">093017000.tif</div>
<!-- IMAGE VIEW -->
<div class="a" style="left:242px;top:70px;width:782px;height:474px;background:#fff;border-top:1px solid #404040;border-left:1px solid #404040;box-shadow:-1px 0 0 #808080"></div>

<div class="a" style="left:238px;top:71px;width:1px;height:672px;background:#fff"></div>
<svg class="a" style="left:244px;top:71px" width="763" height="472" viewBox="244 71 763 472"><ellipse cx="680" cy="70" rx="23" ry="52" transform="rotate(-12 680 70)" fill="none" stroke="#000" stroke-width="1.2" /><ellipse cx="681" cy="76" rx="12" ry="33" transform="rotate(-12 681 76)" fill="none" stroke="#000" stroke-width="1.2" /><ellipse cx="662" cy="79" rx="2.2" ry="3.2" transform="rotate(-15 662 79)" fill="none" stroke="#000" stroke-width="1" /><ellipse cx="696" cy="89" rx="2.2" ry="3.2" transform="rotate(-15 696 89)" fill="none" stroke="#000" stroke-width="1" /><ellipse cx="688" cy="110" rx="2.2" ry="3.2" transform="rotate(-15 688 110)" fill="none" stroke="#000" stroke-width="1" /><ellipse cx="674" cy="104" rx="2.2" ry="3.2" transform="rotate(-15 674 104)" fill="none" stroke="#000" stroke-width="1" /><ellipse cx="699" cy="72" rx="2.2" ry="3.2" transform="rotate(-15 699 72)" fill="none" stroke="#000" stroke-width="1" /><path d="M809.1 47.6 L812.3 50.8 L811.3 54.8 L814.4 58.5 L813.1 62.1 L816.0 66.1 L814.3 69.3 L817.1 73.6 L815.1 76.4 L817.6 80.9 L815.3 83.3 L817.6 88.0 L815.0 90.0 L817.0 94.8 L814.2 96.3 L815.9 101.2 L812.9 102.2 L814.2 107.2 L811.1 107.6 L812.1 112.6 L808.8 112.5 L809.4 117.4 L806.0 116.8 L806.3 121.6 L802.8 120.5 L802.7 125.2 L799.2 123.6 L798.8 128.0 L795.3 125.9 L794.5 130.1 L791.1 127.5 L789.9 131.4 L786.6 128.4 L785.1 131.9 L781.8 128.5 L780.1 131.6 L777.0 127.9 L774.9 130.6 L771.9 126.5 L769.6 128.8 L766.9 124.4 L764.3 126.2 L761.8 121.6 L758.9 122.9 L756.8 118.2 L753.7 118.9 L751.8 114.1 L748.6 114.3 L747.0 109.3 L743.7 109.1 L742.4 104.1 L739.0 103.3 L738.1 98.3 L734.6 97.1 L734.1 92.2 L730.6 90.4 L730.4 85.6 L726.9 83.4 L727.0 78.8 L723.6 76.1 L724.1 71.7 L720.8 68.6 L721.7 64.6 L718.5 61.1 L719.7 57.3 L716.6 53.4 L718.2 50.0" fill="none" stroke="#000" stroke-width="1.1" stroke-linejoin="round"/><path d="M798.0 32.0 L801.2 29.4 L802.8 32.5 L799.4 34.8 L800.8 37.8 L800.8 37.8 L804.3 35.7 L805.7 39.0 L802.1 40.7 L803.4 43.7 L803.4 43.7 L807.1 42.3 L808.4 45.6 L804.5 46.8 L805.6 49.8 L805.6 49.8 L809.6 49.0 L810.6 52.4 L806.6 52.9 L807.5 56.0 L807.5 56.0 L811.6 55.8 L812.5 59.2 L808.3 59.1 L809.0 62.1 L809.0 62.1 L813.3 62.6 L814.0 65.9 L809.7 65.2 L810.2 68.3 L810.2 68.3 L814.6 69.3 L815.1 72.6 L810.6 71.3 L811.0 74.3 L811.0 74.3 L815.5 76.0 L815.7 79.2 L811.2 77.3 L811.4 80.2 L811.4 80.2 L815.9 82.5 L816.0 85.6 L811.4 83.1 L811.4 86.0 L811.4 86.0 L815.9 88.7 L815.8 91.8 L811.2 88.7 L811.0 91.4 L811.0 91.4 L815.5 94.8 L815.1 97.7 L810.7 94.1 L810.2 96.6 L810.2 96.6 L814.6 100.5 L814.1 103.2 L809.7 99.1 L809.1 101.5 L809.1 101.5 L813.4 105.8 L812.6 108.3 L808.4 103.8 L807.6 106.0 L807.6 106.0 L811.7 110.8 L810.7 113.1 L806.7 108.1 L805.7 110.0 L805.7 110.0 L809.7 115.2 L808.5 117.3 L804.6 111.9 L803.5 113.7 L803.5 113.7 L807.2 119.2 L805.9 121.0 L802.2 115.3 L800.9 116.8" fill="none" stroke="#000" stroke-width="1.1" stroke-linejoin="round"/><path d="M805.0 55.0 L806.4 60.3 L807.6 65.6 L808.4 70.9 L808.9 76.0 L809.1 81.0 L809.0 85.8 L808.6 90.4 L807.8 94.8 L806.8 98.9 L805.5 102.6 L803.8 106.1 L801.9 109.1 L799.8 111.8 L797.4 114.1 L794.8 115.9 L792.0 117.3 L789.0 118.3 L785.8 118.8 L782.5 118.8 L779.1 118.4 L775.6 117.5 L772.1 116.1 L768.5 114.3 L764.9 112.1 L761.4 109.5 L757.8 106.5 L754.4 103.1 L751.1 99.3 L747.9 95.3 L744.8 91.0 L742.0 86.4 L739.3 81.6 L736.8 76.6 L734.6 71.5 L732.7 66.3 L731.0 61.0 L729.6 55.7" fill="none" stroke="#000" stroke-width="1.1" stroke-linejoin="round"/><path d="M802.6 55.5 L804.0 60.6 L805.1 65.7 L805.9 70.7 L806.4 75.6 L806.7 80.4 L806.6 85.0 L806.3 89.4 L805.6 93.6 L804.7 97.5 L803.5 101.1 L802.0 104.4 L800.3 107.3 L798.3 109.8 L796.1 112.0 L793.7 113.7 L791.0 115.0 L788.2 115.9 L785.3 116.3 L782.2 116.3 L779.0 115.9 L775.8 115.0 L772.4 113.7 L769.1 111.9 L765.7 109.7 L762.3 107.2 L759.0 104.3 L755.8 101.0 L752.6 97.4 L749.6 93.5 L746.7 89.3 L744.0 84.9 L741.4 80.3 L739.1 75.5 L736.9 70.5 L735.0 65.5 L733.4 60.5 L732.0 55.4" fill="none" stroke="#000" stroke-width="1.0" stroke-linejoin="round"/><path d="M798.3 56.9 L798.8 60.3 L799.1 63.7 L799.3 67.0 L799.2 70.1 L798.9 73.2 L798.4 76.1 L797.7 78.7 L796.8 81.2 L795.7 83.5 L794.4 85.5 L793.0 87.3 L791.4 88.8 L789.6 90.0 L787.7 90.9 L785.7 91.6 L783.6 91.9 L781.4 91.9 L779.2 91.7 L776.9 91.1 L774.5 90.2 L772.1 89.1 L769.7 87.6 L767.4 85.9 L765.1 83.9 L762.8 81.7 L760.6 79.3 L758.5 76.6 L756.5 73.8 L754.6 70.8 L752.8 67.6 L751.2 64.4 L749.7 61.0" fill="none" stroke="#000" stroke-width="1.1" stroke-linejoin="round"/><path d="M790.4 50.0 L790.7 52.0 L790.9 53.9 L791.0 55.8 L791.0 57.6 L790.9 59.3 L790.6 60.9 L790.3 62.4 L789.8 63.8 L789.2 65.1 L788.6 66.2 L787.8 67.2 L786.9 68.1 L786.0 68.7 L785.0 69.3 L783.9 69.6 L782.8 69.8 L781.6 69.8 L780.3 69.6 L779.1 69.2 L777.8 68.7 L776.5 68.0 L775.1 67.2 L773.8 66.2 L772.5 65.0 L771.3 63.8 L770.1 62.3 L768.9 60.8 L767.7 59.2 L766.7 57.5 L765.7 55.7" fill="none" stroke="#000" stroke-width="1.0" stroke-linejoin="round"/><ellipse cx="722" cy="80" rx="2.5" ry="3.5" transform="rotate(-15 722 80)" fill="none" stroke="#000" stroke-width="1" /><path d="M754 128V136" fill="none" stroke="#000" stroke-width="1" stroke-linejoin="round"/><path d="M843 70V75" fill="none" stroke="#000" stroke-width="1" stroke-linejoin="round"/><ellipse cx="447" cy="130" rx="6" ry="9" transform="rotate(-25 447 130)" fill="none" stroke="#000" stroke-width="1.2" /><path d="M442 123L459 116C466 114 468 126 464 131L450 139" fill="none" stroke="#000" stroke-width="1.2" stroke-linejoin="round"/><path d="M447 121L449 139" fill="none" stroke="#000" stroke-width="0.8" stroke-linejoin="round"/><path d="M472 124H520L522 126" fill="none" stroke="#000" stroke-width="1" stroke-linejoin="round"/><path d="M390 151L408 138L416 142V150L405 169L390 163Z" fill="none" stroke="#000" stroke-width="1.2" stroke-linejoin="round"/><ellipse cx="398" cy="159" rx="7" ry="9.5" transform="rotate(-10 398 159)" fill="none" stroke="#000" stroke-width="1.1" /><path d="M402 169L425 210" fill="none" stroke="#000" stroke-width="1.2" stroke-linejoin="round"/><path d="M407 168L430 210" fill="none" stroke="#000" stroke-width="1" stroke-linejoin="round"/><path d="M412 172L436 210" fill="none" stroke="#000" stroke-width="0.8" stroke-dasharray="3 1.5" stroke-linejoin="round"/><path d="M416 150C420 160 424 170 430 178C434 186 440 196 446 202L456 210" fill="none" stroke="#000" stroke-width="1.2" stroke-linejoin="round"/><path d="M423 178L466 153H500" fill="none" stroke="#000" stroke-width="1" stroke-dasharray="8 2 2 2" stroke-linejoin="round"/><path d="M500 152.5H546" fill="none" stroke="#000" stroke-width="1" stroke-linejoin="round"/><path d="M536 108H543L546 112" fill="none" stroke="#000" stroke-width="1.1" stroke-linejoin="round"/><path d="M546 126V250" fill="none" stroke="#000" stroke-width="1.1" stroke-linejoin="round"/><path d="M543 149L547 152L543 155" fill="none" stroke="#000" stroke-width="1" stroke-linejoin="round"/><ellipse cx="474" cy="168" rx="6.5" ry="5" transform="rotate(-30 474 168)" fill="none" stroke="#000" stroke-width="1.2" /><ellipse cx="475" cy="170" rx="4.5" ry="3.5" transform="rotate(-30 475 170)" fill="none" stroke="#000" stroke-width="1" /><path d="M473 174L489 201L495 198L480 171" fill="none" stroke="#000" stroke-width="1.2" stroke-linejoin="round"/><path d="M476 181L482 178M479 186L485 183M482 191L488 188" fill="none" stroke="#000" stroke-width="1" stroke-linejoin="round"/><path d="M492 180H521" fill="none" stroke="#000" stroke-width="1" stroke-dasharray="10 2" stroke-linejoin="round"/><ellipse cx="896" cy="250" rx="50" ry="93" transform="rotate(-24 896 250)" fill="none" stroke="#000" stroke-width="1.4" /><path d="M862.4 167.7 L866.8 167.6 L871.3 168.2 L876.0 169.4 L880.8 171.2 L885.6 173.7 L890.6 176.7 L895.5 180.3 L900.4 184.5 L905.2 189.2 L909.9 194.3 L914.4 199.9 L918.8 205.9 L923.0 212.3 L926.9 218.9 L930.6 225.8 L933.9 232.9 L937.0 240.1 L939.6 247.5 L941.9 254.8 L943.9 262.2 L945.4 269.4 L946.5 276.6 L947.2 283.5 L947.4 290.2 L947.2 296.6 L946.6 302.7 L945.6 308.4 L944.2 313.6 L942.3 318.4 L940.1 322.7 L937.5 326.5 L934.5 329.7 L931.2 332.2 L927.6 334.2 L923.7 335.6 L919.6 336.3" fill="none" stroke="#000" stroke-width="1.1" stroke-linejoin="round"/><path d="M865.4 173.2 L869.9 174.4 L874.6 176.2 L879.3 178.6 L884.0 181.7 L888.8 185.2 L893.5 189.3 L898.1 193.9 L902.7 199.0 L907.1 204.4 L911.4 210.3 L915.4 216.5 L919.3 223.0 L922.8 229.8 L926.1 236.7 L929.1 243.8 L931.7 250.9 L934.0 258.1 L935.9 265.3 L937.4 272.4 L938.5 279.3 L939.2 286.1 L939.5 292.7 L939.4 298.9 L938.8 304.8 L937.9 310.4 L936.6 315.5 L934.8 320.1 L932.7 324.3 L930.2 327.9 L927.4 331.0 L924.2 333.5 L920.8 335.4 L917.1 336.7" fill="none" stroke="#000" stroke-width="1.0" stroke-linejoin="round"/><ellipse cx="858" cy="268" rx="52" ry="92" transform="rotate(-22 858 268)" fill="#fff" stroke="#000" stroke-width="0.1" /><path d="M904.4 249.3 L908.1 247.8 L909.6 251.6 L905.8 252.9 L907.4 257.3 L907.4 257.3 L911.3 256.4 L912.6 260.4 L908.6 260.9 L909.9 265.4 L909.9 265.4 L914.1 265.2 L915.1 269.1 L910.9 269.1 L912.0 273.5 L912.0 273.5 L916.3 274.0 L917.1 277.9 L912.8 277.2 L913.6 281.6 L913.6 281.6 L918.0 282.7 L918.6 286.6 L914.1 285.2 L914.7 289.6 L914.7 289.6 L919.2 291.3 L919.5 295.1 L915.0 293.1 L915.2 297.4 L915.2 297.4 L919.8 299.7 L919.9 303.4 L915.3 300.8 L915.3 304.9 L915.3 304.9 L919.9 307.8 L919.7 311.3 L915.1 308.1 L914.8 312.0 L914.8 312.0 L919.4 315.6 L919.0 318.9 L914.4 315.1 L913.8 318.8 L913.8 318.8 L918.3 322.9 L917.7 326.0 L913.2 321.7 L912.4 325.1 L912.4 325.1 L916.7 329.7 L915.8 332.6 L911.5 327.8 L910.4 330.9 L910.4 330.9 L914.6 335.9 L913.4 338.6 L909.3 333.3 L907.9 336.1 L907.9 336.1 L911.9 341.6 L910.6 343.9 L906.7 338.3 L905.0 340.7 L905.0 340.7 L908.8 346.5 L907.2 348.6 L903.6 342.6 L901.7 344.7 L901.7 344.7 L905.2 350.8 L903.4 352.5 L900.1 346.2 L898.0 347.9 L898.0 347.9 L901.2 354.3 L899.2 355.7 L896.2 349.2 L893.9 350.5 L893.9 350.5 L896.8 357.1 L894.6 358.0 L891.9 351.4 L889.5 352.2 L889.5 352.2 L892.0 359.0 L889.7 359.6 L887.4 352.8 L884.8 353.3 L884.8 353.3 L886.9 360.1 L884.5 360.3 L882.6 353.5 L879.8 353.5 L879.8 353.5 L881.6 360.4 L879.1 360.2 L877.5 353.4 L874.7 353.0 L874.7 353.0 L876.0 359.8 L873.5 359.3 L872.3 352.5 L869.4 351.7 L869.4 351.7 L870.3 358.4 L867.7 357.5 L867.0 350.9 L864.0 349.6 L864.0 349.6 L864.5 356.2 L861.9 354.9 L861.6 348.5 L858.6 346.8 L858.6 346.8 L858.6 353.1 L856.0 351.5 L856.1 345.3 L853.1 343.3 L853.1 343.3 L852.7 349.4 L850.1 347.4 L850.7 341.5 L847.7 339.1 L847.7 339.1 L846.9 344.8 L844.3 342.6 L845.3 337.0 L842.4 334.3 L842.4 334.3 L841.2 339.6 L838.6 337.0 L840.1 331.9 L837.2 328.9 L837.2 328.9 L835.6 333.7 L833.1 330.9 L835.0 326.2 L832.2 322.9 L832.2 322.9 L830.2 327.3 L827.8 324.2 L830.1 320.0 L827.5 316.4 L827.5 316.4 L825.1 320.3 L822.8 317.0 L825.4 313.3 L823.0 309.5 L823.0 309.5 L820.2 312.8 L818.2 309.3 L821.1 306.2 L818.9 302.2 L818.9 302.2 L815.7 304.9 L813.8 301.3 L817.1 298.8 L815.1 294.6 L815.1 294.6 L811.6 296.7 L809.9 292.9 L813.5 291.1 L811.6 286.7 L811.6 286.7 L807.9 288.2 L806.4 284.4 L810.2 283.1 L808.6 278.7 L808.6 278.7 L804.7 279.6 L803.4 275.6 L807.4 275.1 L806.1 270.6 L806.1 270.6 L801.9 270.8 L800.9 266.9 L805.1 266.9 L804.0 262.5 L804.0 262.5 L799.7 262.0 L798.9 258.1 L803.2 258.8 L802.4 254.4 L802.4 254.4 L798.0 253.3 L797.4 249.4 L801.9 250.8 L801.3 246.4 L801.3 246.4 L796.8 244.7 L796.5 240.9 L801.0 242.9 L800.8 238.6 L800.8 238.6 L796.2 236.3 L796.1 232.6 L800.7 235.2 L800.7 231.1 L800.7 231.1 L796.1 228.2 L796.3 224.7 L800.9 227.9 L801.2 224.0 L801.2 224.0 L796.6 220.4 L797.0 217.1 L801.6 220.9 L802.2 217.2 L802.2 217.2 L797.7 213.1 L798.3 210.0 L802.8 214.3 L803.6 210.9 L803.6 210.9 L799.3 206.3 L800.2 203.4 L804.5 208.2 L805.6 205.1 L805.6 205.1 L801.4 200.1 L802.6 197.4 L806.7 202.7 L808.1 199.9 L808.1 199.9 L804.1 194.4 L805.4 192.1 L809.3 197.7 L811.0 195.3 L811.0 195.3 L807.2 189.5 L808.8 187.4 L812.4 193.4 L814.3 191.3 L814.3 191.3 L810.8 185.2 L812.6 183.5 L815.9 189.8 L818.0 188.1 L818.0 188.1 L814.8 181.7 L816.8 180.3 L819.8 186.8 L822.1 185.5 L822.1 185.5 L819.2 178.9 L821.4 178.0 L824.1 184.6 L826.5 183.8 L826.5 183.8 L824.0 177.0 L826.3 176.4 L828.6 183.2 L831.2 182.7 L831.2 182.7 L829.1 175.9 L831.5 175.7 L833.4 182.5 L836.2 182.5 L836.2 182.5 L834.4 175.6 L836.9 175.8 L838.5 182.6 L841.3 183.0 L841.3 183.0 L840.0 176.2 L842.5 176.7 L843.7 183.5 L846.6 184.3 L846.6 184.3 L845.7 177.6 L848.3 178.5 L849.0 185.1 L852.0 186.4 L852.0 186.4 L851.5 179.8 L854.1 181.1 L854.4 187.5 L857.4 189.2 L857.4 189.2 L857.4 182.9 L860.0 184.5 L859.9 190.7 L862.9 192.7 L862.9 192.7 L863.3 186.6 L865.9 188.6 L865.3 194.5 L868.3 196.9 L868.3 196.9 L869.1 191.2 L871.7 193.4 L870.7 199.0 L873.6 201.7 L873.6 201.7 L874.8 196.4 L877.4 199.0 L875.9 204.1 L878.8 207.1 L878.8 207.1 L880.4 202.3 L882.9 205.1 L881.0 209.8 L883.8 213.1 L883.8 213.1 L885.8 208.7 L888.2 211.8 L885.9 216.0 L888.5 219.6 L888.5 219.6 L890.9 215.7 L893.2 219.0 L890.6 222.7 L893.0 226.5 L893.0 226.5 L895.8 223.2 L897.8 226.7 L894.9 229.8 L897.1 233.8 L897.1 233.8 L900.3 231.1 L902.2 234.7 L898.9 237.2 L900.9 241.4 L900.9 241.4 L904.4 239.3 L906.1 243.1 L902.5 244.9 L904.4 249.3" fill="none" stroke="#000" stroke-width="1.1" stroke-linejoin="round"/><ellipse cx="859" cy="268" rx="46" ry="85" transform="rotate(-22 859 268)" fill="none" stroke="#000" stroke-width="1.2" /><path d="M883.2 339.9 L879.4 339.8 L875.5 339.2 L871.4 338.0 L867.3 336.3 L863.1 334.1 L858.9 331.3 L854.8 328.0 L850.7 324.3 L846.6 320.1 L842.7 315.5 L838.9 310.5 L835.3 305.2 L831.8 299.6 L828.6 293.7 L825.7 287.6 L823.0 281.4 L820.6 275.0 L818.5 268.6 L816.7 262.1 L815.3 255.7 L814.2 249.4 L813.5 243.1 L813.1 237.1 L813.1 231.3 L813.5 225.7 L814.2 220.5 L815.3 215.6 L816.7 211.0 L818.5 206.9 L820.5 203.3 L822.9 200.1 L825.6 197.4 L828.6 195.3 L831.8 193.7 L835.2 192.6 L838.8 192.1" fill="none" stroke="#000" stroke-width="1.0" stroke-dasharray="16 3" stroke-linejoin="round"/><path d="M844.1 192.1 L840.6 180.8 L843.2 180.8 L846.3 192.1 L848.6 192.4 L848.6 192.4 L845.8 181.1 L848.6 181.6 L850.9 192.8 L853.3 193.5 L853.3 193.5 L851.3 182.4 L854.1 183.4 L855.8 194.4 L858.2 195.5 L858.2 195.5 L857.0 184.7 L859.9 186.2 L860.7 196.8 L863.2 198.3 L863.2 198.3 L862.7 187.9 L865.6 189.9 L865.7 200.0 L868.2 201.9 L868.2 201.9 L868.6 192.1 L871.4 194.6 L870.7 204.0 L873.2 206.3 L873.2 206.3 L874.3 197.2 L877.2 200.1 L875.7 208.8 L878.1 211.4 L878.1 211.4 L880.0 203.1 L882.8 206.4 L880.5 214.2 L882.8 217.2 L882.8 217.2 L885.5 209.8 L888.2 213.4 L885.1 220.3 L887.4 223.5 L887.4 223.5 L890.8 217.1 L893.3 221.0 L889.6 226.8 L891.7 230.3 L891.7 230.3 L895.7 225.0 L898.1 229.1 L893.7 233.9 L895.6 237.5 L895.6 237.5 L900.3 233.3 L902.5 237.7 L897.5 241.3 L899.2 245.1 L899.2 245.1 L904.5 242.1 L906.4 246.6 L900.9 248.9 L902.4 252.9 L902.4 252.9 L908.2 251.1 L909.9 255.7 L903.9 256.8 L905.2 260.8 L905.2 260.8 L911.4 260.3 L912.8 264.9 L906.4 264.8 L907.5 268.7 L907.5 268.7 L914.0 269.5 L915.1 274.1 L908.4 272.7 L909.2 276.6 L909.2 276.6 L916.0 278.6 L916.8 283.1 L909.9 280.5 L910.5 284.4 L910.5 284.4 L917.5 287.6 L918.0 292.0 L910.9 288.2 L911.1 291.9 L911.1 291.9 L918.3 296.3 L918.4 300.5 L911.3 295.5 L911.3 299.0 L911.3 299.0 L918.4 304.6 L918.3 308.5 L911.1 302.4 L910.9 305.7 L910.9 305.7 L917.9 312.3 L917.5 316.0 L910.4 308.9 L909.9 312.0 L909.9 312.0 L916.8 319.5 L916.0 322.9 L909.2 314.9 L908.4 317.6 L908.4 317.6 L915.1 326.0 L914.0 329.0 L907.4 320.2 L906.4 322.6 L906.4 322.6 L912.7 331.8 L911.3 334.4 L905.2 324.8 L903.8 326.8 L903.8 326.8 L909.8 336.7 L908.1 338.9 L902.4 328.6 L900.8 330.3 L900.8 330.3 L906.3 340.8 L904.4 342.4 L899.2 331.7 L897.4 333.0" fill="none" stroke="#000" stroke-width="1.2" stroke-linejoin="round"/><path d="M844.1 192.1 L847.6 192.3 L851.3 192.9 L855.1 194.1 L859.0 195.9 L862.9 198.1 L866.8 200.9 L870.8 204.1 L874.7 207.8 L878.5 211.9 L882.3 216.4 L885.9 221.3 L889.4 226.5 L892.7 232.0 L895.8 237.7 L898.6 243.7 L901.2 249.8 L903.6 256.0 L905.6 262.2 L907.4 268.5 L908.8 274.7 L910.0 280.9 L910.7 286.9 L911.2 292.8 L911.3 298.4 L911.0 303.8 L910.5 308.8 L909.5 313.6 L908.3 317.9 L906.7 321.8 L904.8 325.3 L902.6 328.4 L900.2 330.9 L897.4 333.0" fill="none" stroke="#000" stroke-width="1.1" stroke-linejoin="round"/><path d="M857.1 193.7 L860.7 194.8 L864.3 196.4 L868.1 198.6 L871.8 201.2 L875.5 204.3 L879.2 207.8 L882.9 211.7 L886.4 215.9 L889.9 220.6 L893.1 225.5 L896.3 230.7 L899.2 236.1 L901.9 241.7 L904.4 247.5 L906.6 253.4 L908.6 259.3 L910.2 265.3 L911.6 271.2 L912.7 277.0 L913.4 282.7 L913.8 288.2 L913.9 293.6 L913.7 298.7 L913.1 303.5 L912.2 307.9 L911.0 312.1 L909.6 315.8 L907.8 319.1" fill="none" stroke="#000" stroke-width="0.9" stroke-linejoin="round"/><path d="M877.9 305.0 L875.1 303.5 L872.2 301.7 L869.4 299.5 L866.6 297.0 L863.9 294.2 L861.3 291.2 L858.7 287.9 L856.3 284.3 L854.0 280.6 L851.8 276.7 L849.8 272.7 L848.0 268.5 L846.4 264.2 L845.1 260.0 L843.9 255.7 L842.9 251.4 L842.2 247.1 L841.8 243.0 L841.6 238.9 L841.6 235.0 L841.9 231.3 L842.4 227.8 L843.2 224.5 L844.1 221.5 L845.4 218.7 L846.8 216.3 L848.5 214.1 L850.3 212.3 L852.3 210.9 L854.5 209.8 L856.9 209.1 L859.3 208.7 L861.9 208.7 L864.6 209.1 L867.3 209.9 L870.1 211.0 L872.9 212.5 L875.8 214.3 L878.6 216.5 L881.4 219.0 L884.1 221.8 L886.7 224.8" fill="none" stroke="#000" stroke-width="1.1" stroke-linejoin="round"/><ellipse cx="878" cy="258" rx="18" ry="33" transform="rotate(-22 878 258)" fill="none" stroke="#000" stroke-width="1" stroke-dasharray="9 2" /><ellipse cx="881" cy="257" rx="11" ry="21" transform="rotate(-22 881 257)" fill="none" stroke="#000" stroke-width="1.3" /><ellipse cx="884" cy="256" rx="6" ry="13" transform="rotate(-22 884 256)" fill="none" stroke="#000" stroke-width="1.0" /><ellipse cx="872" cy="234" rx="1.8" ry="2.6" transform="rotate(0 872 234)" fill="none" stroke="#000" stroke-width="0.9" /><ellipse cx="867" cy="268" rx="1.8" ry="2.6" transform="rotate(0 867 268)" fill="none" stroke="#000" stroke-width="0.9" /><ellipse cx="883" cy="290" rx="1.8" ry="2.6" transform="rotate(0 883 290)" fill="none" stroke="#000" stroke-width="0.9" /><ellipse cx="893" cy="230" rx="1.8" ry="2.6" transform="rotate(0 893 230)" fill="none" stroke="#000" stroke-width="0.9" /><path d="M926 335V387" fill="none" stroke="#000" stroke-width="1" stroke-dasharray="8 3 2 3" stroke-linejoin="round"/><path d="M914 156L938 147C943 146 944 153 940 155L917 165" fill="none" stroke="#000" stroke-width="1.2" stroke-linejoin="round"/><ellipse cx="915" cy="160" rx="3.5" ry="5" transform="rotate(-20 915 160)" fill="none" stroke="#000" stroke-width="1.2" /><path d="M929 137V147" fill="none" stroke="#000" stroke-width="1" stroke-linejoin="round"/><path d="M970 137V161" fill="none" stroke="#000" stroke-width="1.2" stroke-linejoin="round"/><path d="M968 163L978 160L985 164L986 172L978 176L969 172Z" fill="none" stroke="#000" stroke-width="1.3" stroke-linejoin="round"/><path d="M969 170L935 183C931 185 932 191 936 191L971 177" fill="none" stroke="#000" stroke-width="1.2" stroke-linejoin="round"/><path d="M940 191.0L941.5 184.0" fill="none" stroke="#000" stroke-width="0.9" stroke-linejoin="round"/><path d="M944 189.4L945.5 182.4" fill="none" stroke="#000" stroke-width="0.9" stroke-linejoin="round"/><path d="M948 187.8L949.5 180.8" fill="none" stroke="#000" stroke-width="0.9" stroke-linejoin="round"/><path d="M952 186.2L953.5 179.2" fill="none" stroke="#000" stroke-width="0.9" stroke-linejoin="round"/><path d="M956 184.6L957.5 177.6" fill="none" stroke="#000" stroke-width="0.9" stroke-linejoin="round"/><path d="M960 183.0L961.5 176.0" fill="none" stroke="#000" stroke-width="0.9" stroke-linejoin="round"/><path d="M964 181.4L965.5 174.4" fill="none" stroke="#000" stroke-width="0.9" stroke-linejoin="round"/><path d="M968 179.8L969.5 172.8" fill="none" stroke="#000" stroke-width="0.9" stroke-linejoin="round"/><path d="M979 207V233" fill="none" stroke="#000" stroke-width="1.2" stroke-linejoin="round"/><path d="M985 228L995 226L1000 232L999 241L990 243L984 237Z" fill="none" stroke="#000" stroke-width="1.3" stroke-linejoin="round"/><path d="M986 234L966 242C962 244 963 250 967 250L987 243" fill="none" stroke="#000" stroke-width="1.2" stroke-linejoin="round"/><path d="M969.0 250.0L970.5 243.0" fill="none" stroke="#000" stroke-width="0.9" stroke-linejoin="round"/><path d="M972.5 248.7L974.0 241.7" fill="none" stroke="#000" stroke-width="0.9" stroke-linejoin="round"/><path d="M976.0 247.4L977.5 240.4" fill="none" stroke="#000" stroke-width="0.9" stroke-linejoin="round"/><path d="M979.5 246.1L981.0 239.1" fill="none" stroke="#000" stroke-width="0.9" stroke-linejoin="round"/><path d="M983.0 244.8L984.5 237.8" fill="none" stroke="#000" stroke-width="0.9" stroke-linejoin="round"/><path d="M986.5 243.5L988.0 236.5" fill="none" stroke="#000" stroke-width="0.9" stroke-linejoin="round"/><path d="M762 278L791 267C797 266 798 273 794 275L764 288" fill="none" stroke="#000" stroke-width="1.2" stroke-linejoin="round"/><ellipse cx="763" cy="283" rx="3" ry="5" transform="rotate(-20 763 283)" fill="none" stroke="#000" stroke-width="1.2" /><path d="M767 281L772 279L777 280L782 277L787 276" fill="none" stroke="#000" stroke-width="0.8" stroke-linejoin="round"/><path d="M775 251V272" fill="none" stroke="#000" stroke-width="1" stroke-linejoin="round"/><path d="M740.4 341.6 L738.7 339.4 L737.2 337.0 L735.8 334.5 L734.4 331.9 L733.2 329.3 L732.1 326.5 L731.2 323.7 L730.4 320.9 L729.7 318.0 L729.2 315.2 L728.9 312.4 L728.7 309.7 L728.7 307.0 L728.8 304.4 L729.2 302.0 L729.6 299.7 L730.2 297.6 L731.0 295.6 L731.9 293.8 L733.0 292.2 L734.1 290.8 L735.4 289.7 L736.9 288.7 L738.4 288.1 L740.0 287.6 L741.6 287.4 L743.4 287.5 L745.2 287.8 L747.0 288.3 L748.9 289.1" fill="none" stroke="#000" stroke-width="1.45" stroke-linejoin="round"/><ellipse cx="757" cy="318" rx="18" ry="33" transform="rotate(-20 757 318)" fill="#fff" stroke="#000" stroke-width="1.45" /><ellipse cx="750" cy="325" rx="11" ry="21" transform="rotate(-20 750 325)" fill="none" stroke="#000" stroke-width="1.15" /><ellipse cx="748" cy="327" rx="6" ry="13" transform="rotate(-20 748 327)" fill="none" stroke="#000" stroke-width="1.15" /><ellipse cx="746" cy="328" rx="1.2" ry="1.6" transform="rotate(0 746 328)" fill="none" stroke="#000" stroke-width="1" /><path d="M688.7 321.6 L688.2 318.0 L687.9 314.4 L687.9 311.0 L688.1 307.7 L688.4 304.6 L689.0 301.6 L689.7 298.8 L690.7 296.3 L691.8 294.0 L693.1 292.0 L694.6 290.2 L696.3 288.7 L698.0 287.5 L700.0 286.7 L702.0 286.1 L704.1 285.9 L706.3 285.9 L708.6 286.3 L710.9 287.1 L713.2 288.1 L715.6 289.4 L718.0 291.1 L720.3 293.0 L722.6 295.1 L724.8 297.6 L727.0 300.2" fill="none" stroke="#000" stroke-width="1.3" stroke-linejoin="round"/><ellipse cx="707" cy="333" rx="24" ry="44" transform="rotate(-20 707 333)" fill="#fff" stroke="#000" stroke-width="1.45" /><path d="M708.0 294.9 L710.1 296.1 L712.2 297.6 L714.3 299.3 L716.3 301.3 L718.3 303.6 L720.2 306.0 L722.1 308.6 L723.9 311.4 L725.5 314.3 L727.1 317.4 L728.5 320.6 L729.7 323.8 L730.9 327.1 L731.8 330.5 L732.6 333.8 L733.2 337.1 L733.7 340.4 L733.9 343.6 L734.0 346.7 L733.9 349.7 L733.6 352.5 L733.2 355.2 L732.5 357.7 L731.7 360.0" fill="none" stroke="#000" stroke-width="1.15" stroke-linejoin="round"/><path d="M727 352L740 352L746 360L744 370L735 376" fill="#fff" stroke="#000" stroke-width="1.45" stroke-linejoin="round"/><path d="M718 328L725 322L720 318M720 331L727 368" fill="none" stroke="#000" stroke-width="0.9" stroke-linejoin="round"/><ellipse cx="692" cy="348" rx="11" ry="22" transform="rotate(-20 692 348)" fill="#fff" stroke="#000" stroke-width="1.3" /><path d="M689.6 330.8 L690.3 330.9 L691.1 331.1 L691.9 331.4 L692.7 331.8 L693.5 332.3 L694.4 333.0 L695.2 333.8 L696.0 334.6 L696.8 335.6 L697.6 336.6 L698.4 337.8 L699.1 339.0 L699.8 340.2 L700.4 341.5 L701.0 342.9 L701.5 344.3 L702.0 345.7 L702.4 347.1 L702.8 348.5 L703.1 349.9 L703.3 351.3 L703.4 352.6 L703.5 353.9 L703.5 355.2 L703.4 356.4 L703.3 357.5 L703.1 358.5 L702.8 359.5 L702.4 360.3 L702.0 361.1 L701.6 361.7 L701.0 362.3 L700.4 362.7 L699.8 363.0 L699.1 363.2 L698.4 363.2" fill="none" stroke="#000" stroke-width="0.9" stroke-linejoin="round"/><ellipse cx="697" cy="355" rx="1.2" ry="1.6" transform="rotate(0 697 355)" fill="none" stroke="#000" stroke-width="1" /><path d="M667.0 358.5 L666.6 355.8 L666.4 353.1 L666.2 350.4 L666.3 347.9 L666.5 345.5 L666.8 343.3 L667.3 341.2 L667.9 339.2 L668.7 337.5 L669.6 336.0 L670.6 334.6 L671.8 333.5 L673.0 332.7 L674.4 332.1 L675.8 331.7 L677.3 331.5 L678.9 331.6 L680.5 332.0 L682.2 332.6 L683.9 333.4 L685.6 334.5 L687.4 335.8 L689.1 337.3 L690.8 339.0" fill="none" stroke="#000" stroke-width="1.3" stroke-linejoin="round"/><ellipse cx="681" cy="368" rx="17" ry="34" transform="rotate(-20 681 368)" fill="#fff" stroke="#000" stroke-width="1.45" /><path d="M671.4 370.0 L670.9 367.9 L670.5 365.8 L670.2 363.8 L670.0 361.8 L669.9 359.9 L669.9 358.0 L670.0 356.3 L670.2 354.6 L670.5 353.1 L671.0 351.7 L671.5 350.4 L672.1 349.3 L672.8 348.4 L673.6 347.6 L674.5 347.0 L675.4 346.5 L676.5 346.2 L677.5 346.2 L678.7 346.2 L679.8 346.5 L681.0 347.0 L682.2 347.6 L683.5 348.4 L684.7 349.4 L685.9 350.5 L687.1 351.8 L688.3 353.2 L689.5 354.7 L690.6 356.4 L691.7 358.1 L692.7 360.0 L693.6 361.9" fill="none" stroke="#000" stroke-width="1.15" stroke-linejoin="round"/><path d="M676.8 368.8 L676.6 367.3 L676.4 365.9 L676.3 364.5 L676.3 363.2 L676.3 362.0 L676.5 360.8 L676.6 359.7 L676.9 358.7 L677.2 357.8 L677.6 357.0 L678.1 356.4 L678.6 355.8 L679.2 355.4 L679.8 355.1 L680.5 354.9 L681.2 354.9 L682.0 355.0 L682.8 355.2 L683.6 355.5 L684.4 356.0 L685.3 356.6 L686.1 357.3 L687.0 358.1 L687.8 359.0 L688.6 360.1 L689.4 361.2 L690.2 362.4 L691.0 363.6" fill="none" stroke="#000" stroke-width="0.9" stroke-linejoin="round"/><path d="M675 389L678 385L680 391Z" fill="none" stroke="#000" stroke-width="0.8" stroke-linejoin="round"/><path d="M656 345L668 341L671 350L662 356" fill="none" stroke="#000" stroke-width="1.3" stroke-linejoin="round"/><ellipse cx="662" cy="385" rx="12" ry="32" transform="rotate(-20 662 385)" fill="none" stroke="#000" stroke-width="1.3" /><path d="M656 412L670 408" fill="none" stroke="#000" stroke-width="1" stroke-linejoin="round"/><path d="M657 279C666 286 666 294 660 298" fill="none" stroke="#000" stroke-width="1.45" stroke-linejoin="round"/><path d="M662 470V482" fill="none" stroke="#000" stroke-width="1" stroke-linejoin="round"/><path d="M660 470C668 466 666 456 660 456" fill="none" stroke="#000" stroke-width="1.1" stroke-linejoin="round"/><path d="M835 416V432L999 353V339" fill="none" stroke="#000" stroke-width="1.7" stroke-linejoin="round"/><ellipse cx="310" cy="436" rx="29" ry="50" transform="rotate(-25 310 436)" fill="none" stroke="#000" stroke-width="1.3" /><path d="M290.8 390.2 L293.4 390.1 L296.1 390.2 L299.0 390.8 L301.8 391.6 L304.8 392.9 L307.7 394.4 L310.6 396.3 L313.6 398.5 L316.4 401.0 L319.2 403.7 L321.9 406.7 L324.5 410.0 L326.9 413.4 L329.2 417.1 L331.3 420.8 L333.3 424.7 L335.0 428.7 L336.6 432.8 L337.9 436.9 L338.9 441.0 L339.8 445.0 L340.3 449.0 L340.6 453.0 L340.7 456.7 L340.5 460.4 L340.1 463.8 L339.4 467.1 L338.4 470.1 L337.3 472.9 L335.8 475.4 L334.2 477.6 L332.4 479.5 L330.3 481.1 L328.1 482.3 L325.8 483.2 L323.2 483.8 L320.6 483.9 L317.9 483.8" fill="none" stroke="#000" stroke-width="1.1" stroke-linejoin="round"/><path d="M293.1 391.2 L296.0 391.8 L298.8 392.6 L301.8 393.9 L304.7 395.4 L307.6 397.3 L310.6 399.5 L313.4 402.0 L316.2 404.7 L318.9 407.7 L321.5 411.0 L323.9 414.4 L326.2 418.1 L328.3 421.8 L330.3 425.7 L332.0 429.7 L333.6 433.8 L334.9 437.9 L335.9 442.0 L336.8 446.0 L337.3 450.0 L337.6 454.0 L337.7 457.7 L337.5 461.4 L337.1 464.8 L336.4 468.1 L335.4 471.1 L334.3 473.9 L332.8 476.4 L331.2 478.6 L329.4 480.5 L327.3 482.1 L325.1 483.3 L322.8 484.2 L320.2 484.8" fill="none" stroke="#000" stroke-width="1.0" stroke-linejoin="round"/><ellipse cx="299" cy="441" rx="29" ry="48" transform="rotate(-25 299 441)" fill="#fff" stroke="#000" stroke-width="1.3" /><ellipse cx="301" cy="440" rx="24" ry="42" transform="rotate(-25 301 440)" fill="none" stroke="#000" stroke-width="1.1" /><path d="M295.1 463.1 L293.2 460.8 L291.3 458.4 L289.5 455.8 L287.9 453.1 L286.3 450.3 L284.9 447.5 L283.6 444.5 L282.4 441.5 L281.4 438.5 L280.6 435.5 L280.0 432.5 L279.5 429.6 L279.2 426.7 L279.1 423.9 L279.1 421.3 L279.4 418.7 L279.8 416.4 L280.4 414.2 L281.2 412.2 L282.1 410.4 L283.2 408.8 L284.5 407.4 L285.8 406.3 L287.4 405.5 L289.0 404.9 L290.7 404.5 L292.6 404.4 L294.5 404.6 L296.5 405.0 L298.5 405.7 L300.6 406.7 L302.7 407.9 L304.8 409.3 L306.8 411.0 L308.9 412.8 L310.9 414.9 L312.8 417.2 L314.7 419.6 L316.5 422.2 L318.1 424.9 L319.7 427.7 L321.1 430.5 L322.4 433.5 L323.6 436.5 L324.6 439.5 L325.4 442.5 L326.0 445.5 L326.5 448.4 L326.8 451.3 L326.9 454.1" fill="none" stroke="#000" stroke-width="1.0" stroke-linejoin="round"/><ellipse cx="306" cy="438" rx="16" ry="31" transform="rotate(-25 306 438)" fill="none" stroke="#000" stroke-width="1.0" /><ellipse cx="300" cy="418" rx="2" ry="3" transform="rotate(-15 300 418)" fill="none" stroke="#000" stroke-width="1.1" /><path d="M304 428L312 426M310 432L314 446L308 448M312 456L316 462L312 466" fill="none" stroke="#000" stroke-width="1.0" stroke-linejoin="round"/><path d="M287 388V364" fill="none" stroke="#000" stroke-width="1.1" stroke-linejoin="round"/><path d="M273 457L318 440" fill="none" stroke="#000" stroke-width="1.1" stroke-dasharray="9 2 2 2" stroke-linejoin="round"/><path d="M333 422L343 416L368 444" fill="none" stroke="#000" stroke-width="1.1" stroke-linejoin="round"/><path d="M270 503L276 499C280 497 282 503 279 505L272 509" fill="none" stroke="#000" stroke-width="1.2" stroke-linejoin="round"/><path d="M279 499L296 489" fill="none" stroke="#000" stroke-width="1.1" stroke-linejoin="round"/><ellipse cx="262" cy="507" rx="5" ry="9" transform="rotate(-20 262 507)" fill="#fff" stroke="#000" stroke-width="1.2" /><ellipse cx="255" cy="512" rx="6.5" ry="6" transform="rotate(-20 255 512)" fill="#fff" stroke="#000" stroke-width="1.4" /><path d="M251 509L255 506L259 509L259 514L255 517L251 514Z" fill="none" stroke="#000" stroke-width="0.9" stroke-linejoin="round"/><path d="M265 517V531" fill="none" stroke="#000" stroke-width="1.1" stroke-linejoin="round"/><path d="M356 506L372 500M358 521L372 514" fill="none" stroke="#000" stroke-width="1.3" stroke-linejoin="round"/><ellipse cx="351" cy="514" rx="11" ry="14" transform="rotate(-15 351 514)" fill="#fff" stroke="#000" stroke-width="1.3" /><ellipse cx="346" cy="514" rx="9" ry="12" transform="rotate(-15 346 514)" fill="#fff" stroke="#000" stroke-width="1.3" /><path d="M345 506L350 504M346 510L352 508M347 514L353 512M347 518L353 516" fill="none" stroke="#000" stroke-width="1.1" stroke-linejoin="round"/><path d="M358 473V501" fill="none" stroke="#000" stroke-width="1" stroke-linejoin="round"/><path d="M364 267H372" fill="none" stroke="#000" stroke-width="1" stroke-linejoin="round"/><ellipse cx="268" cy="317" rx="0.8" ry="0.8" transform="rotate(0 268 317)" fill="none" stroke="#000" stroke-width="1" /></svg>
<div class="a" style="left:999px;top:71px;width:8px;height:472px;background:repeating-linear-gradient(135deg, transparent 0 7px, #d6d4c0 7px 8px)"></div>
<div class="a" style="left:523px;top:104px;width:12px;height:13px;background:#f2e04a"></div>
<div class="t" style="left:518px;top:105.5px;width:22px;height:12px;text-align:center;font-size:11px;line-height:12px;color:#e84a10;-webkit-text-stroke:0.2px #e84a10;transform:scaleX(0.88)">28</div>
<div class="a" style="left:523px;top:117px;width:19px;height:15px;background:#fff;border:1px solid #7a7ad8;box-shadow:inset 2px -2px 0 #0a0a50;"></div>
<div class="t" style="left:513px;top:117px;width:39px;height:15px;text-align:center;font-size:18px;line-height:15.5px;color:#000;-webkit-text-stroke:0.45px #000;transform:scaleX(0.8)">28</div>
<div class="a" style="left:553px;top:132px;width:12px;height:12px;background:#f2e04a"></div>
<div class="t" style="left:548px;top:132.5px;width:22px;height:12px;text-align:center;font-size:11px;line-height:12px;color:#e84a10;-webkit-text-stroke:0.2px #e84a10;transform:scaleX(0.88)">25</div>
<div class="a" style="left:553px;top:144px;width:19px;height:15px;background:#fff;border:1px solid #7a7ad8;box-shadow:inset 2px -2px 0 #0a0a50;"></div>
<div class="t" style="left:543px;top:144px;width:39px;height:15px;text-align:center;font-size:18px;line-height:15.5px;color:#000;-webkit-text-stroke:0.45px #000;transform:scaleX(0.8)">25</div>
<div class="a" style="left:522px;top:163px;width:12px;height:11px;background:#f2e04a"></div>
<div class="t" style="left:517px;top:162.5px;width:22px;height:12px;text-align:center;font-size:11px;line-height:12px;color:#e84a10;-webkit-text-stroke:0.2px #e84a10;transform:scaleX(0.88)">26</div>
<div class="a" style="left:522px;top:174px;width:19px;height:15px;background:#fff;border:1px solid #7a7ad8;box-shadow:inset 2px -2px 0 #0a0a50;"></div>
<div class="t" style="left:512px;top:174px;width:39px;height:15px;text-align:center;font-size:18px;line-height:15.5px;color:#000;-webkit-text-stroke:0.45px #000;transform:scaleX(0.8)">26</div>
<div class="a" style="left:523px;top:198px;width:12px;height:11px;background:#f2e04a"></div>
<div class="t" style="left:518px;top:197.5px;width:22px;height:12px;text-align:center;font-size:11px;line-height:12px;color:#e84a10;-webkit-text-stroke:0.2px #e84a10;transform:scaleX(0.88)">27</div>
<div class="a" style="left:685px;top:139px;width:12px;height:11px;background:#f2e04a"></div>
<div class="t" style="left:680px;top:138.5px;width:22px;height:12px;text-align:center;font-size:11px;line-height:12px;color:#e84a10;-webkit-text-stroke:0.2px #e84a10;transform:scaleX(0.88)">22</div>
<div class="a" style="left:685px;top:150px;width:19px;height:15px;background:#fff;border:1px solid #7a7ad8;box-shadow:inset 2px -2px 0 #0a0a50;"></div>
<div class="t" style="left:675px;top:150px;width:39px;height:15px;text-align:center;font-size:18px;line-height:15.5px;color:#000;-webkit-text-stroke:0.45px #000;transform:scaleX(0.8)">22</div>
<div class="a" style="left:745px;top:137px;width:12px;height:11px;background:#f2e04a"></div>
<div class="t" style="left:740px;top:136.5px;width:22px;height:12px;text-align:center;font-size:11px;line-height:12px;color:#e84a10;-webkit-text-stroke:0.2px #e84a10;transform:scaleX(0.88)">20</div>
<div class="a" style="left:745px;top:148px;width:19px;height:15px;background:#fff;border:1px solid #7a7ad8;box-shadow:inset 2px -2px 0 #0a0a50;"></div>
<div class="t" style="left:735px;top:148px;width:39px;height:15px;text-align:center;font-size:18px;line-height:15.5px;color:#000;-webkit-text-stroke:0.45px #000;transform:scaleX(0.8)">20</div>
<div class="a" style="left:833px;top:74px;width:12px;height:12px;background:#f2e04a"></div>
<div class="t" style="left:828px;top:74.5px;width:22px;height:12px;text-align:center;font-size:11px;line-height:12px;color:#e84a10;-webkit-text-stroke:0.2px #e84a10;transform:scaleX(0.88)">21</div>
<div class="a" style="left:833px;top:86px;width:19px;height:15px;background:#fff;border:1px solid #7a7ad8;box-shadow:inset 2px -2px 0 #0a0a50;"></div>
<div class="t" style="left:823px;top:86px;width:39px;height:15px;text-align:center;font-size:18px;line-height:15.5px;color:#000;-webkit-text-stroke:0.45px #000;transform:scaleX(0.8)">21</div>
<div class="a" style="left:921px;top:111px;width:12px;height:10px;background:#f2e04a"></div>
<div class="t" style="left:916px;top:109.5px;width:22px;height:12px;text-align:center;font-size:11px;line-height:12px;color:#e84a10;-webkit-text-stroke:0.2px #e84a10;transform:scaleX(0.88)">17</div>
<div class="a" style="left:921px;top:121px;width:19px;height:15px;background:#fff;border:1px solid #7a7ad8;"></div>
<div class="t" style="left:911px;top:121px;width:39px;height:15px;text-align:center;font-size:18px;line-height:15.5px;color:#000;-webkit-text-stroke:0.45px #000;transform:scaleX(0.8)">17</div>
<div class="a" style="left:959px;top:111px;width:18px;height:10px;background:#f2e04a"></div>
<div class="t" style="left:954px;top:109.5px;width:28px;height:12px;text-align:center;font-size:11px;line-height:12px;color:#e84a10;-webkit-text-stroke:0.2px #e84a10;transform:scaleX(0.88)">23A</div>
<div class="a" style="left:959px;top:121px;width:31px;height:15px;background:#fff;border:1px solid #7a7ad8;box-shadow:inset 2px -2px 0 #0a0a50;"></div>
<div class="t" style="left:949px;top:121px;width:51px;height:15px;text-align:center;font-size:18px;line-height:15.5px;color:#000;-webkit-text-stroke:0.45px #000;transform:scaleX(0.8)">23A</div>
<div class="a" style="left:970px;top:181px;width:12px;height:10px;background:#f2e04a"></div>
<div class="t" style="left:965px;top:179.5px;width:22px;height:12px;text-align:center;font-size:11px;line-height:12px;color:#e84a10;-webkit-text-stroke:0.2px #e84a10;transform:scaleX(0.88)">23</div>
<div class="a" style="left:970px;top:191px;width:19px;height:15px;background:#fff;border:1px solid #7a7ad8;box-shadow:inset 2px -2px 0 #0a0a50;"></div>
<div class="t" style="left:960px;top:191px;width:39px;height:15px;text-align:center;font-size:18px;line-height:15.5px;color:#000;-webkit-text-stroke:0.45px #000;transform:scaleX(0.8)">23</div>
<div class="a" style="left:762px;top:221px;width:18px;height:10px;background:#f2e04a"></div>
<div class="t" style="left:757px;top:219.5px;width:28px;height:12px;text-align:center;font-size:11px;line-height:12px;color:#e84a10;-webkit-text-stroke:0.2px #e84a10;transform:scaleX(0.88)">17A</div>
<div class="a" style="left:762px;top:231px;width:31px;height:15px;background:#fff;border:1px solid #7a7ad8;"></div>
<div class="t" style="left:752px;top:231px;width:51px;height:15px;text-align:center;font-size:18px;line-height:15.5px;color:#000;-webkit-text-stroke:0.45px #000;transform:scaleX(0.8)">17A</div>
<div class="a" style="left:941px;top:342px;width:12px;height:11px;background:#f2e04a"></div>
<div class="t" style="left:936px;top:341.5px;width:22px;height:12px;text-align:center;font-size:11px;line-height:12px;color:#e84a10;-webkit-text-stroke:0.2px #e84a10;transform:scaleX(0.88)">17</div>
<div class="a" style="left:941px;top:353px;width:19px;height:15px;background:#fff;border:1px solid #7a7ad8;"></div>
<div class="t" style="left:931px;top:353px;width:39px;height:15px;text-align:center;font-size:18px;line-height:15.5px;color:#000;-webkit-text-stroke:0.45px #000;transform:scaleX(0.8)">17</div>
<div class="a" style="left:843px;top:385px;width:18px;height:11px;background:#f2e04a"></div>
<div class="t" style="left:838px;top:384.5px;width:28px;height:12px;text-align:center;font-size:11px;line-height:12px;color:#e84a10;-webkit-text-stroke:0.2px #e84a10;transform:scaleX(0.88)">17A</div>
<div class="a" style="left:843px;top:396px;width:31px;height:15px;background:#fff;border:1px solid #7a7ad8;"></div>
<div class="t" style="left:833px;top:396px;width:51px;height:15px;text-align:center;font-size:18px;line-height:15.5px;color:#000;-webkit-text-stroke:0.45px #000;transform:scaleX(0.8)">17A</div>
<div class="a" style="left:920px;top:390px;width:12px;height:10px;background:#f2e04a"></div>
<div class="t" style="left:915px;top:388.5px;width:22px;height:12px;text-align:center;font-size:11px;line-height:12px;color:#e84a10;-webkit-text-stroke:0.2px #e84a10;transform:scaleX(0.88)">15</div>
<div class="a" style="left:920px;top:400px;width:19px;height:15px;background:#fff;border:1px solid #7a7ad8;"></div>
<div class="t" style="left:910px;top:400px;width:39px;height:15px;text-align:center;font-size:18px;line-height:15.5px;color:#000;-webkit-text-stroke:0.45px #000;transform:scaleX(0.8)">15</div>
<div class="a" style="left:277px;top:339px;width:12px;height:11px;background:#f2e04a"></div>
<div class="t" style="left:272px;top:338.5px;width:22px;height:12px;text-align:center;font-size:11px;line-height:12px;color:#e84a10;-webkit-text-stroke:0.2px #e84a10;transform:scaleX(0.88)">5A</div>
<div class="a" style="left:277px;top:350px;width:22px;height:15px;background:#fff;border:1px solid #7a7ad8;"></div>
<div class="t" style="left:267px;top:350px;width:42px;height:15px;text-align:center;font-size:18px;line-height:15.5px;color:#000;-webkit-text-stroke:0.45px #000;transform:scaleX(0.8)">5A</div>
<div class="a" style="left:350px;top:449px;width:12px;height:10px;background:#f2e04a"></div>
<div class="t" style="left:345px;top:447.5px;width:22px;height:12px;text-align:center;font-size:11px;line-height:12px;color:#e84a10;-webkit-text-stroke:0.2px #e84a10;transform:scaleX(0.88)">11</div>
<div class="a" style="left:350px;top:459px;width:16px;height:15px;background:#fff;border:1px solid #7a7ad8;box-shadow:inset 2px -2px 0 #0a0a50;"></div>
<div class="t" style="left:340px;top:459px;width:36px;height:15px;text-align:center;font-size:18px;line-height:15.5px;color:#000;-webkit-text-stroke:0.45px #000;transform:scaleX(0.8)">11</div>
<div class="a" style="left:260px;top:532px;width:6px;height:11px;background:#f2e04a"></div>
<div class="t" style="left:255px;top:531.5px;width:16px;height:12px;text-align:center;font-size:11px;line-height:12px;color:#e84a10;-webkit-text-stroke:0.2px #e84a10;transform:scaleX(0.88)">7</div>
<div class="a" style="left:348px;top:252px;width:12px;height:10px;background:#f2e04a"></div>
<div class="t" style="left:343px;top:250.5px;width:22px;height:12px;text-align:center;font-size:11px;line-height:12px;color:#e84a10;-webkit-text-stroke:0.2px #e84a10;transform:scaleX(0.88)">31</div>
<div class="a" style="left:348px;top:262px;width:15px;height:15px;background:#fff;border:1px solid #7a7ad8;box-shadow:inset 2px -2px 0 #0a0a50;"></div>
<div class="t" style="left:338px;top:262px;width:35px;height:15px;text-align:center;font-size:18px;line-height:15.5px;color:#000;-webkit-text-stroke:0.45px #000;transform:scaleX(0.8)">31</div>
<div class="a" style="left:651px;top:482px;width:12px;height:10px;background:#f2e04a"></div>
<div class="t" style="left:646px;top:480.5px;width:22px;height:12px;text-align:center;font-size:11px;line-height:12px;color:#e84a10;-webkit-text-stroke:0.2px #e84a10;transform:scaleX(0.88)">29</div>
<div class="a" style="left:651px;top:492px;width:20px;height:15px;background:#fff;border:1px solid #7a7ad8;"></div>
<div class="t" style="left:641px;top:492px;width:40px;height:15px;text-align:center;font-size:18px;line-height:15.5px;color:#000;-webkit-text-stroke:0.45px #000;transform:scaleX(0.8)">29</div>
<svg class="a" style="left:0;top:0" width="16" height="18" shape-rendering="crispEdges"><rect x="0" y="0" width="16" height="18" fill="#00ff00"/>
<rect x="0" y="0" width="16" height="9" fill="#0000ff"/>
<rect x="0" y="0" width="16" height="3" fill="#000080"/>
<rect x="0" y="9" width="16" height="3" fill="#002020"/>
<rect x="11" y="4" width="5" height="4" fill="#6020c0"/>
<rect x="4" y="0" width="1" height="18" fill="#e0f060"/><rect x="10" y="0" width="1" height="18" fill="#e0f060"/>
<rect x="0" y="3" width="16" height="1" fill="#a0a0ff" opacity="0.6"/><rect x="0" y="8" width="16" height="1" fill="#c0c0ff" opacity="0.7"/></svg>
<svg class="a" style="left:2px;top:20px" width="16" height="18" shape-rendering="crispEdges"><rect x="0" y="0" width="16" height="18" fill="#00ff00"/>
<rect x="0" y="0" width="16" height="9" fill="#0000ff"/>
<rect x="0" y="0" width="16" height="3" fill="#000080"/>
<rect x="0" y="9" width="16" height="3" fill="#002020"/>
<rect x="11" y="4" width="5" height="4" fill="#6020c0"/>
<rect x="4" y="0" width="1" height="18" fill="#e0f060"/><rect x="10" y="0" width="1" height="18" fill="#e0f060"/>
<rect x="0" y="3" width="16" height="1" fill="#a0a0ff" opacity="0.6"/><rect x="0" y="8" width="16" height="1" fill="#c0c0ff" opacity="0.7"/></svg>
<svg class="a" style="left:973px;top:2px" width="50" height="14" shape-rendering="crispEdges"><rect x="4" y="9" width="6" height="2" fill="#000"/><rect x="21" y="2" width="6" height="5" fill="none" stroke="#000" stroke-width="1"/><rect x="20.5" y="1.5" width="7" height="1.5" fill="#000"/><rect x="19" y="5" width="6" height="6" fill="#d4d0c8" stroke="#000" stroke-width="1"/><rect x="18.5" y="4.5" width="7" height="1.5" fill="#000"/></svg>
<svg class="a" style="left:1007px;top:2px" width="16" height="14"><path d="M4 3.5L11 10.5M11 3.5L4 10.5" stroke="#000" stroke-width="1.7"/></svg>
<svg class="a" style="left:973px;top:22px" width="50" height="14" shape-rendering="crispEdges"><rect x="4" y="9" width="6" height="2" fill="#000"/><rect x="21" y="2" width="6" height="5" fill="none" stroke="#000" stroke-width="1"/><rect x="20.5" y="1.5" width="7" height="1.5" fill="#000"/><rect x="19" y="5" width="6" height="6" fill="#d4d0c8" stroke="#000" stroke-width="1"/><rect x="18.5" y="4.5" width="7" height="1.5" fill="#000"/></svg>
<svg class="a" style="left:1007px;top:22px" width="16" height="14"><path d="M4 3.5L11 10.5M11 3.5L4 10.5" stroke="#000" stroke-width="1.7"/></svg>
<div class="a" style="left:1007px;top:71px;width:16px;height:472px;background:repeating-conic-gradient(#fff 0 25%, #d4d0c8 0 50%) 0 0/2px 2px"></div>
<div class="btn" style="left:1007px;top:71px;width:16px;height:16px"></div>
<svg class="a" style="left:1007px;top:71px" width="16" height="16" shape-rendering="crispEdges"><path d="M4 10H11L7.5 6.5Z" fill="#000"/></svg>
<div class="btn" style="left:1007px;top:526px;width:16px;height:17px"></div>
<svg class="a" style="left:1007px;top:526px" width="16" height="16" shape-rendering="crispEdges"><path d="M4 6H11L7.5 9.5Z" fill="#000"/></svg>
<div class="btn" style="left:1007px;top:161px;width:16px;height:221px"></div>
<div class="a" style="left:1023px;top:71px;width:1px;height:472px;background:#d4d0c8"></div>
<!-- BOTTOM PANEL -->
<div class="a" style="left:242px;top:543px;width:782px;height:1px;background:#d4d0c8"></div>
<div class="a" style="left:243px;top:544px;width:781px;height:1px;background:#fff"></div>
<div class="a" style="left:243px;top:547px;width:780px;height:196px;border-top:1px solid #404040;border-left:1px solid #404040;border-right:1px solid #fff;border-bottom:1px solid #fff;box-shadow:inset 1px 1px 0 #808080, inset -1px -1px 0 #d4d0c8"></div>
<div class="a" style="left:256px;top:566px;width:237px;height:165px;border-top:1px solid #808080;border-left:1px solid #808080;border-right:1px solid #fff;border-bottom:1px solid #fff;box-shadow:inset 1px 1px 0 #fff, 1px 1px 0 #808080 inset"></div>
<div class="a" style="left:257px;top:567px;width:235px;height:163px;border-right:1px solid #808080;border-bottom:1px solid #808080"></div>
<div class="a" style="left:263px;top:560px;width:51px;height:12px;background:#d4d0c8"></div>
<div class="t" style="left:265px;top:560.3px;font-size:12px;line-height:14px;transform:scaleX(0.89);transform-origin:0 0;">Properties</div>
<div class="a" style="left:514px;top:566px;width:496px;height:165px;border-top:1px solid #808080;border-left:1px solid #808080;border-right:1px solid #fff;border-bottom:1px solid #fff;box-shadow:inset 1px 1px 0 #fff, 1px 1px 0 #808080 inset"></div>
<div class="a" style="left:515px;top:567px;width:494px;height:163px;border-right:1px solid #808080;border-bottom:1px solid #808080"></div>
<div class="a" style="left:521px;top:560px;width:22px;height:12px;background:#d4d0c8"></div>
<div class="t" style="left:523px;top:560.3px;font-size:12px;line-height:14px;transform:scaleX(0.89);transform-origin:0 0;">Edit</div>
<div class="t" style="left:266px;top:585.8px;font-size:12px;line-height:14px;transform:scaleX(0.89);transform-origin:0 0;">Number detected Blocks:</div>
<div class="t" style="left:399px;top:585.8px;font-size:12px;line-height:14px;transform:scaleX(0.89);transform-origin:0 0;">35</div>
<div class="t" style="left:266px;top:611.8px;font-size:12px;line-height:14px;transform:scaleX(0.89);transform-origin:0 0;">Number of the current Block:</div>
<div class="t" style="left:266px;top:637.8px;font-size:12px;line-height:14px;transform:scaleX(0.89);transform-origin:0 0;">Coordinates:</div>
<div class="t" style="left:286px;top:663.8px;font-size:12px;line-height:14px;transform:scaleX(0.89);transform-origin:0 0;">top left (x,y):</div>
<div class="t" style="left:286px;top:689.3px;font-size:12px;line-height:14px;transform:scaleX(0.89);transform-origin:0 0;">bottom right (x,y):</div>
<div class="a" style="left:676px;top:580px;width:33px;height:24px;border:1px solid #000"></div>
<div class="btn" style="left:677px;top:581px;width:31px;height:22px"></div>
<div class="t" style="left:632.5px;width:120px;text-align:center;top:584.0px;font-size:12px;line-height:14px;transform:scaleX(0.88);transform-origin:50% 0">|&thinsp;&lt;</div>
<div class="btn" style="left:716px;top:580px;width:33px;height:24px"></div>
<div class="t" style="left:672.5px;width:120px;text-align:center;top:584.0px;font-size:12px;line-height:14px;transform:scaleX(0.88);transform-origin:50% 0">&lt;&lt;</div>
<div class="btn" style="left:771px;top:580px;width:33px;height:24px"></div>
<div class="t" style="left:727.5px;width:120px;text-align:center;top:584.0px;font-size:12px;line-height:14px;transform:scaleX(0.88);transform-origin:50% 0">&gt;&gt;</div>
<div class="btn" style="left:811px;top:580px;width:34px;height:24px"></div>
<div class="t" style="left:768.0px;width:120px;text-align:center;top:584.0px;font-size:12px;line-height:14px;transform:scaleX(0.88);transform-origin:50% 0">&gt;&thinsp;|</div>
<div class="a" style="left:533px;top:610px;width:457px;height:23px;background:#fff;border-top:1px solid #808080;border-left:1px solid #808080;border-right:1px solid #fff;border-bottom:1px solid #fff;box-shadow:inset 1px 1px 0 #404040, inset -1px -1px 0 #d4d0c8"></div>
<div class="btn" style="left:645px;top:641px;width:105px;height:25px"></div>
<div class="t" style="left:637.5px;width:120px;text-align:center;top:645.5px;font-size:12px;line-height:14px;transform:scaleX(0.88);transform-origin:50% 0"><u>D</u>elete Block</div>
<div class="btn" style="left:771px;top:641px;width:105px;height:25px"></div>
<div class="t" style="left:763.5px;width:120px;text-align:center;top:645.5px;font-size:12px;line-height:14px;transform:scaleX(0.88);transform-origin:50% 0"><u>E</u>dit Rect</div>
<div class="btn" style="left:645px;top:672px;width:105px;height:25px"></div>
<div class="t" style="left:637.5px;width:120px;text-align:center;top:676.5px;font-size:12px;line-height:14px;transform:scaleX(0.88);transform-origin:50% 0"><u>C</u>lear Area</div>
<div class="btn" style="left:771px;top:672px;width:105px;height:25px"></div>
<div class="t" style="left:763.5px;width:120px;text-align:center;top:676.5px;font-size:12px;line-height:14px;transform:scaleX(0.88);transform-origin:50% 0"><u>I</u>nsert Block</div>
<div class="btn" style="left:815px;top:703px;width:67px;height:23px"></div>
<div class="t" style="left:788.5px;width:120px;text-align:center;top:706.5px;font-size:12px;line-height:14px;transform:scaleX(0.88);transform-origin:50% 0">Size...</div>
<div class="a" style="left:533px;top:711px;width:13px;height:13px;background:#fff;border-top:1px solid #808080;border-left:1px solid #808080;border-right:1px solid #fff;border-bottom:1px solid #fff;box-shadow:inset 1px 1px 0 #404040, inset -1px -1px 0 #d4d0c8"></div>
<div class="t" style="left:552px;top:711.3px;font-size:12px;line-height:14px;transform:scaleX(0.89);transform-origin:0 0;transform:scaleX(0.903)">create a new Block by click the right Mousebutton</div>
<div class="t" style="left:0px;top:750px;font-size:12px;line-height:14px;transform:scaleX(0.88);transform-origin:0 0">Press F1 for Help.</div>
<div class="a" style="left:592px;top:747px;width:86px;height:18px;border-top:1px solid #808080;border-left:1px solid #808080;border-right:1px solid #fff;border-bottom:1px solid #fff;overflow:hidden"></div>
<div class="a" style="left:593px;top:748px;width:84px;height:16px;overflow:hidden"><div class="t" style="left:0px;top:1px;font-size:12px;line-height:14px;transform:scaleX(0.92);transform-origin:0 0">VW-Testeinstellung</div></div>
<div class="a" style="left:679px;top:747px;width:87px;height:18px;border-top:1px solid #808080;border-left:1px solid #808080;border-right:1px solid #fff;border-bottom:1px solid #fff;overflow:hidden"></div>
<div class="a" style="left:680px;top:748px;width:85px;height:16px;overflow:hidden"><div class="t" style="left:1px;top:1px;font-size:12px;line-height:14px;transform:scaleX(0.97);transform-origin:0 0">x:25, y:901</div></div>
<div class="a" style="left:767px;top:747px;width:97px;height:18px;border-top:1px solid #808080;border-left:1px solid #808080;border-right:1px solid #fff;border-bottom:1px solid #fff;overflow:hidden"></div>
<div class="a" style="left:768px;top:748px;width:95px;height:16px;overflow:hidden"><div class="t" style="left:1px;top:1px;font-size:12px;line-height:14px;transform:scaleX(0.9);transform-origin:0 0">RGB(255,255,255)</div></div>
<div class="a" style="left:865px;top:747px;width:87px;height:18px;border-top:1px solid #808080;border-left:1px solid #808080;border-right:1px solid #fff;border-bottom:1px solid #fff;overflow:hidden"></div>
<div class="a" style="left:866px;top:748px;width:85px;height:16px;overflow:hidden"><div class="t" style="left:1px;top:1px;font-size:12px;line-height:14px;transform:scaleX(0.92);transform-origin:0 0">Zoom: 45 %</div></div>
<div class="a" style="left:954px;top:747px;width:19px;height:18px;border-top:1px solid #808080;border-left:1px solid #808080;border-right:1px solid #fff;border-bottom:1px solid #fff;overflow:hidden"></div>
<div class="a" style="left:975px;top:747px;width:28px;height:18px;border-top:1px solid #808080;border-left:1px solid #808080;border-right:1px solid #fff;border-bottom:1px solid #fff;overflow:hidden"></div>
<div class="a" style="left:976px;top:748px;width:26px;height:16px;overflow:hidden"><div class="t" style="left:0px;top:1px;font-size:12px;line-height:14px;transform:scaleX(0.92);transform-origin:0 0">NUM</div></div>
<div class="a" style="left:1006px;top:747px;width:18px;height:18px;border-top:1px solid #808080;border-left:1px solid #808080;border-right:1px solid #fff;border-bottom:1px solid #fff;overflow:hidden"></div>
<div class="a" style="left:370px;top:210px;width:285px;height:345px;background:#d4d0c8;border-top:1px solid #d4d0c8;border-left:1px solid #d4d0c8;border-right:1px solid #404040;border-bottom:1px solid #404040;box-shadow:inset 1px 1px 0 #fff,inset -1px -1px 0 #808080"></div>
<div class="a" style="left:373px;top:213px;width:279px;height:18px;background:linear-gradient(to right,#0a246a,#a6caf0)"></div>
<div class="t" style="left:374px;top:215px;color:#fff;font-weight:bold;font-size:12px;line-height:14px;transform:scaleX(0.965);transform-origin:0 0">Analysing Document</div>
<div class="btn" style="left:634px;top:215px;width:16px;height:14px"></div>
<svg class="a" style="left:638px;top:218px" width="9" height="8"><path d="M1 0.5L8 7.5M8 0.5L1 7.5" stroke="#000" stroke-width="1.6"/></svg>
<div class="t" style="left:383.5px;top:243.5px;line-height:14px;font-size:12px;transform:scaleX(0.89);transform-origin:0 0;">Document 10 of 24 (093006000.tif)</div>
<div class="t" style="left:451px;width:120px;text-align:center;top:270px;font-size:12px;line-height:14px;transform:scaleX(0.89);">37%</div>
<div class="t" style="left:383.5px;top:334.6px;line-height:14px;font-size:12px;transform:scaleX(0.89);transform-origin:0 0;">Page 1 of 1</div>
<div class="t" style="left:448px;width:120px;text-align:center;top:361px;font-size:12px;line-height:14px;transform:scaleX(0.89);">0%</div>
<div class="t" style="left:383.5px;top:426px;line-height:14px;font-size:12px;transform:scaleX(0.89);transform-origin:0 0;">Step 2 of 5 (threshold analyse)</div>
<div class="t" style="left:451px;width:120px;text-align:center;top:452.4px;font-size:12px;line-height:14px;transform:scaleX(0.89);">10%</div>
<div class="a" style="left:383px;top:289px;width:259px;height:22px;border-top:1px solid #808080;border-left:1px solid #808080;border-right:1px solid #fff;border-bottom:1px solid #fff"></div>
<div class="a" style="left:385px;top:291px;width:96px;height:18px;background:#0a246a"></div>
<div class="a" style="left:383px;top:380px;width:259px;height:22px;border-top:1px solid #808080;border-left:1px solid #808080;border-right:1px solid #fff;border-bottom:1px solid #fff"></div>
<div class="a" style="left:383px;top:471px;width:259px;height:22px;border-top:1px solid #808080;border-left:1px solid #808080;border-right:1px solid #fff;border-bottom:1px solid #fff"></div>
<div class="a" style="left:385px;top:473px;width:27px;height:18px;background:#0a246a"></div>
<div class="a" style="left:473px;top:517px;width:76px;height:24px;border:1px solid #000"></div>
<div class="btn" style="left:474px;top:518px;width:74px;height:22px"></div>
<div class="t" style="left:495px;top:521px;line-height:14px;font-size:12px;transform:scaleX(0.92);transform-origin:0 0">Cancel</div>
<svg class="a" style="left:519px;top:522px" width="20" height="28">
<path d="M6.5 1.5C6.5 0 9.5 0 9.5 1.5V10.5C9.5 9 12.5 9 12.5 10.5V11.5C12.5 10 15.5 10 15.5 11.5V12.5C15.5 11 18.5 11 18.5 12.5V19.5C18.5 22 17.5 23.5 16.5 25.5H7.5C6.5 23.5 3.5 21 1.5 18C0.5 16 0.8 14.5 2 14.5C3 14.5 4.5 15.5 6.5 18Z" fill="#fff" stroke="#000" stroke-linejoin="round"/>
<path d="M9.5 10.5V16.5M12.5 11.5V16.5M15.5 12.5V16.5" stroke="#000" fill="none"/>
</svg>
</body></html>
